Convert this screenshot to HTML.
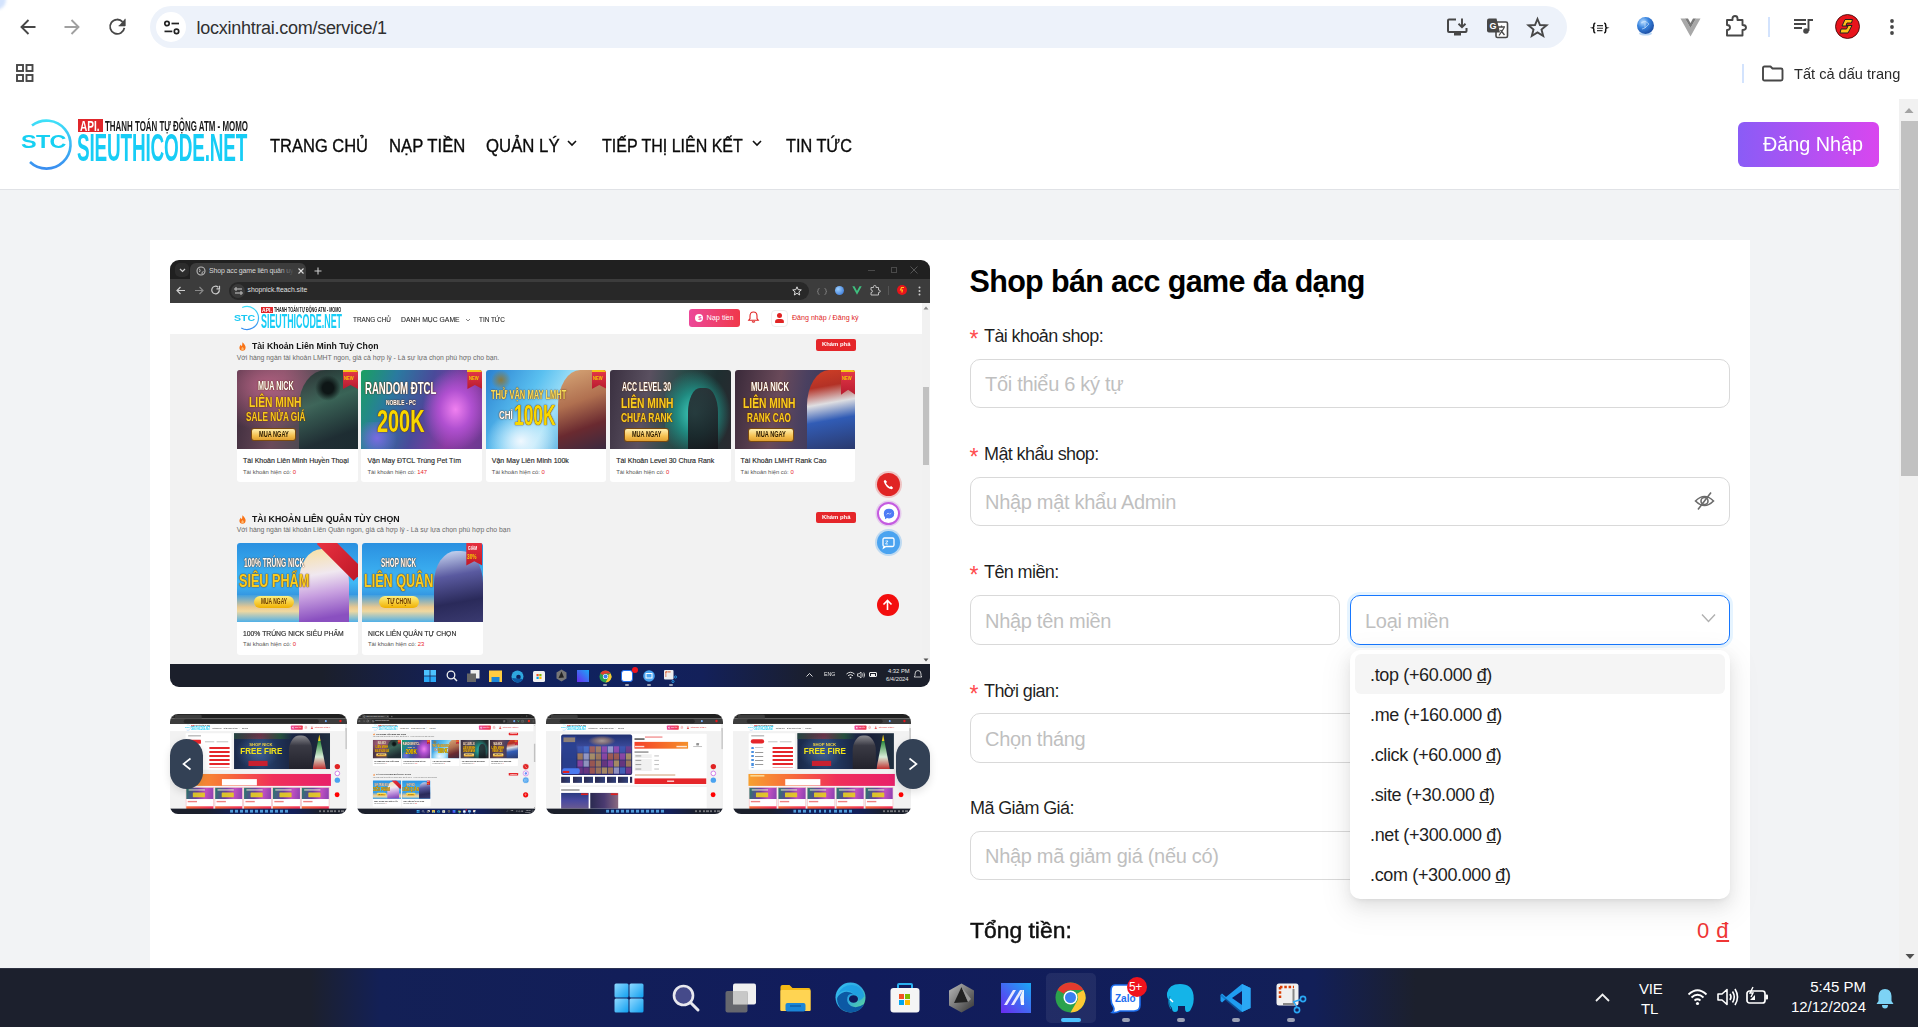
<!DOCTYPE html>
<html><head><meta charset="utf-8">
<style>
*{box-sizing:border-box;margin:0;padding:0}
html,body{width:1918px;height:1027px;overflow:hidden;background:#fff;font-family:"Liberation Sans",sans-serif;color:#000}
.a{position:absolute}
.t{position:absolute;white-space:nowrap;line-height:1}
svg{position:absolute;overflow:visible}
.nv{font-size:19px;color:#0a0a0a;-webkit-text-stroke:0.35px #0a0a0a;transform-origin:left top}
.inp{border:1px solid #d9d9d9;border-radius:10px;background:#fff}
.ph{font-size:20px;color:#bfbfbf;letter-spacing:-0.3px}
.dd{font-size:18px;color:#1f1f1f;letter-spacing:-0.35px}
</style></head><body>
<!-- ============ CHROME TOOLBAR ============ -->
<div class="a" style="left:0;top:0;width:1918px;height:96px;background:#fff"></div>
<div class="a" style="left:-6px;top:-6px;width:12px;height:16px;border-radius:0 0 10px 0;background:#d3e3fd;filter:blur(1.5px)"></div>
<div class="a" id="omni" style="left:150px;top:6px;width:1417px;height:42px;border-radius:21px;background:#edf2fa"></div>
<div class="a" style="left:156px;top:12px;width:30px;height:30px;border-radius:15px;background:#fff"></div>

<!-- toolbar icons -->
<svg style="left:19px;top:18px" width="18" height="18" viewBox="0 0 18 18"><path d="M16.5 9 H3 M9.5 2 L2.5 9 L9.5 16" fill="none" stroke="#474747" stroke-width="1.9"/></svg>
<svg style="left:63px;top:18px" width="18" height="18" viewBox="0 0 18 18"><path d="M1.5 9 H15 M8.5 2 L15.5 9 L8.5 16" fill="none" stroke="#a0a0a0" stroke-width="1.9"/></svg>
<svg style="left:108px;top:17px" width="20" height="20" viewBox="0 0 20 20"><path d="M16.35 10.78 A7.18 7.18 0 1 1 14.6 4.9" fill="none" stroke="#474747" stroke-width="1.8"/><path d="M17.2 1.8 V8.9 H10.6 Z" fill="#474747"/><path d="M17.2 1.8 V8.9 H10.6" fill="none" stroke="#474747" stroke-width="0.8"/></svg>
<svg style="left:161.5px;top:17.6px" width="20" height="20" viewBox="0 0 20 20"><circle cx="5" cy="5.5" r="2.2" fill="none" stroke="#222" stroke-width="1.7"/><path d="M9.5 5.5 H17" stroke="#222" stroke-width="1.7"/><circle cx="14.5" cy="13.4" r="2.2" fill="none" stroke="#222" stroke-width="1.7"/><path d="M2.5 13.4 H10.3" stroke="#222" stroke-width="1.7"/></svg>
<svg style="left:1446px;top:17px" width="23" height="21" viewBox="0 0 23 21"><path d="M10 2.5 H3 Q2 2.5 2 3.5 V14 Q2 15 3 15 H19.5 Q20.5 15 20.5 14 V11" fill="none" stroke="#474747" stroke-width="2"/><path d="M8 15 V18.5 H15 V15" fill="#474747"/><path d="M16 1.5 V10 M12.5 6.8 L16 10.2 L19.5 6.8" fill="none" stroke="#474747" stroke-width="1.9"/></svg>
<svg style="left:1486px;top:17px" width="23" height="22" viewBox="0 0 23 22"><rect x="10" y="5" width="11.5" height="15.5" rx="1.5" fill="#fff" stroke="#474747" stroke-width="1.6"/><path d="M3 1.5 H10.5 L14 15.5 H3 Q1 15.5 1 13.5 V3.5 Q1 1.5 3 1.5Z" fill="#474747"/><text x="3.5" y="12" font-family="Liberation Sans" font-weight="700" font-size="9" fill="#fff">G</text><path d="M12 10 H19 M15.5 8.5 V10 M13 18.5 L18 11 M14.5 13 L18.5 18" fill="none" stroke="#474747" stroke-width="1.3"/></svg>
<svg style="left:1527px;top:17px" width="21" height="21" viewBox="0 0 21 21"><path d="M10.5 2 L13 8 L19.5 8.3 L14.5 12.5 L16.2 19 L10.5 15.4 L4.8 19 L6.5 12.5 L1.5 8.3 L8 8Z" fill="none" stroke="#474747" stroke-width="1.9" stroke-linejoin="miter"/></svg>
<svg style="left:1591px;top:22px" width="18" height="12" viewBox="0 0 18 12"><path d="M4.3 1 Q2.8 1.3 2.8 3 V4.6 Q2.8 5.6 1.6 5.9 Q2.8 6.3 2.8 7.3 V8.9 Q2.8 10.6 4.3 10.9 M13.2 1 Q14.7 1.3 14.7 3 V4.6 Q14.7 5.6 15.9 5.9 Q14.7 6.3 14.7 7.3 V8.9 Q14.7 10.6 13.2 10.9" fill="none" stroke="#111" stroke-width="1.5"/><path d="M6 3.6 H12 M6 6.2 H12 M6 8.6 H11.5" stroke="#333" stroke-width="1.1"/></svg>
<svg style="left:1636px;top:16px" width="19" height="20" viewBox="0 0 19 20"><defs><radialGradient id="gb" cx="35%" cy="30%" r="75%"><stop offset="0" stop-color="#b8dcff"/><stop offset=".45" stop-color="#3a86e0"/><stop offset="1" stop-color="#1a4aa0"/></radialGradient></defs><ellipse cx="9.5" cy="17.5" rx="6.5" ry="2" fill="#9cc4f0" opacity=".7"/><circle cx="9.5" cy="9.5" r="8.5" fill="url(#gb)"/><path d="M5 7 L9 5 L13 8 L9 12 L6 13 M9 5 L9 12" stroke="#e0f0ff" stroke-width=".7" fill="none" opacity=".8"/></svg>
<svg style="left:1680px;top:18px" width="21" height="19" viewBox="0 0 21 19"><path d="M0.5 0.5 H5 L10.5 10 L16 0.5 H20.5 L10.5 18.5Z" fill="#a8a8a8"/><path d="M5 0.5 H8 L10.5 5 L13 0.5 H16 L10.5 10Z" fill="#7a7a7a"/></svg>
<svg style="left:1725px;top:15px" width="23" height="22" viewBox="0 0 23 22"><path d="M2 5 H7.5 V3.5 Q7.5 1 10 1 Q12.5 1 12.5 3.5 V5 H17.5 V10 Q21 10 21 12.5 Q21 15 17.5 15 V20.5 H2 V15 Q5 15 5 12.5 Q5 10 2 10Z" fill="none" stroke="#474747" stroke-width="1.9" stroke-linejoin="round"/></svg>
<div class="a" style="left:1768px;top:17px;width:2px;height:20px;background:#d3e3fd"></div>
<svg style="left:1793px;top:18px" width="21" height="16" viewBox="0 0 21 16"><path d="M1 2 H13 M1 6 H13 M1 10 H9" stroke="#474747" stroke-width="1.9"/><path d="M15.5 13 V2 H20" fill="none" stroke="#474747" stroke-width="1.9"/><circle cx="13" cy="13" r="2.8" fill="#474747"/></svg>
<svg style="left:1835px;top:14px" width="25" height="25" viewBox="0 0 25 25"><circle cx="12.5" cy="12.5" r="12" fill="#e8141b" stroke="#300" stroke-width=".8"/><path d="M17.5 5.5 H10 L7 12 H13 L11.5 15 H6 L5 19 H13 L17 11.5 H11 L12 9 H16.5Z" fill="#ffc21a" stroke="#222" stroke-width="1"/></svg>
<svg style="left:1889px;top:18px" width="6" height="18" viewBox="0 0 6 18"><circle cx="3" cy="3" r="1.9" fill="#474747"/><circle cx="3" cy="9" r="1.9" fill="#474747"/><circle cx="3" cy="15" r="1.9" fill="#474747"/></svg>
<svg style="left:16px;top:64px" width="18" height="19" viewBox="0 0 18 19"><rect x="1" y="1" width="6" height="6" fill="none" stroke="#474747" stroke-width="1.9"/><rect x="10.5" y="1" width="6" height="6" fill="none" stroke="#474747" stroke-width="1.9"/><rect x="1" y="11" width="6" height="6" fill="none" stroke="#474747" stroke-width="1.9"/><rect x="10.5" y="11" width="6" height="6" fill="none" stroke="#474747" stroke-width="1.9"/></svg>
<svg style="left:1762px;top:65px" width="22" height="17" viewBox="0 0 22 17"><path d="M2.5 1.5 H8.5 L10.5 3.5 H19 Q20.5 3.5 20.5 5 V14 Q20.5 15.5 19 15.5 H2.5 Q1 15.5 1 14 V3 Q1 1.5 2.5 1.5Z" fill="none" stroke="#474747" stroke-width="1.9" stroke-linejoin="round"/></svg>
<div class="t" style="left:196.6px;top:18.6px;font-size:18px;color:#303030;letter-spacing:-0.28px">locxinhtrai.com/service/1</div>
<div class="t" style="left:1794.3px;top:66px;font-size:15px;color:#2a2a2a;transform:scaleX(0.973);transform-origin:left">Tất cả dấu trang</div>
<div class="a" style="left:1742px;top:64px;width:2px;height:19px;background:#d3e3fd"></div>

<!-- ============ PAGE HEADER ============ -->
<div class="a" style="left:0;top:190px;width:1899px;height:778px;background:#f2f3f5"></div>
<div class="a" style="left:0;top:189px;width:1899px;height:1.3px;background:#e0e2e6"></div>

<!-- logo -->
<svg style="left:20px;top:116px" width="56" height="56" viewBox="0 0 56 56"><defs><linearGradient id="lg1" x1="0" y1="0" x2="0" y2="1"><stop offset="0" stop-color="#3ee0f8"/><stop offset="1" stop-color="#3a8ef0"/></linearGradient></defs><path d="M12 9.5 A24 24 0 1 1 10 46" fill="none" stroke="url(#lg1)" stroke-width="2.6"/></svg>
<div class="t" style="left:21px;top:133px;font-size:18px;font-weight:700;color:#17d0f2;transform:scaleX(1.3);transform-origin:left;letter-spacing:-0.5px">STC</div>
<div class="a" style="left:78px;top:119px;width:25px;height:13px;background:#e0262b"></div>
<div class="t" style="left:80px;top:119px;font-size:14px;font-weight:700;color:#fff;transform:scaleX(0.72);transform-origin:left">API.</div>
<div class="t" style="left:105px;top:118.5px;font-size:14.5px;font-weight:700;color:#1a1a1a;transform:scaleX(0.547);transform-origin:left">THANH TOÁN TỰ ĐỘNG ATM - MOMO</div>
<div class="t" style="left:77px;top:128px;font-size:39px;font-weight:700;color:#17cdf6;transform:scaleX(0.485);transform-origin:left;letter-spacing:-0.3px">SIEUTHICODE.NET</div>
<svg style="left:566px;top:139px" width="12" height="8" viewBox="0 0 12 8"><path d="M2 2 L6 6 L10 2" fill="none" stroke="#111" stroke-width="1.6"/></svg>
<svg style="left:751px;top:139px" width="12" height="8" viewBox="0 0 12 8"><path d="M2 2 L6 6 L10 2" fill="none" stroke="#111" stroke-width="1.6"/></svg>
<div class="t nv" style="left:269.5px;top:135.7px;transform:scaleX(0.868)">TRANG CHỦ</div>
<div class="t nv" style="left:389px;top:135.7px;transform:scaleX(0.878)">NẠP TIỀN</div>
<div class="t nv" style="left:486px;top:135.7px;transform:scaleX(0.882)">QUẢN LÝ</div>
<div class="t nv" style="left:602px;top:135.7px;transform:scaleX(0.842)">TIẾP THỊ LIÊN KẾT</div>
<div class="t nv" style="left:786px;top:135.7px;transform:scaleX(0.856)">TIN TỨC</div>
<div class="a" style="left:1738px;top:122px;width:141px;height:45px;border-radius:6px;background:linear-gradient(90deg,#8a5cf6,#d946ef)"></div>
<div class="t" style="left:1763px;top:134.4px;font-size:20.5px;color:#fff;transform:scaleX(0.965);transform-origin:left">Đăng Nhập</div>

<!-- ============ CARD ============ -->
<div class="a" style="left:150px;top:240px;width:1600px;height:728px;background:#fff"></div>




<!-- ============ MINI SCREENSHOT ============ -->
<div class="a" id="mini" style="left:170px;top:260px;width:760px;height:427px;border-radius:9px;overflow:hidden;background:#f2f2f2">
<div class="a" style="left:0px;top:0px;width:760px;height:19px;background:#202020"></div>
<div class="a" style="left:5px;top:3px;width:14px;height:14px;background:#2c2c2c;border-radius:5px"></div>
<svg style="left:9px;top:8px" width="7" height="5" viewBox="0 0 7 5"><path d="M1 1 L3.5 3.5 L6 1" fill="none" stroke="#ccc" stroke-width="1.2"/></svg>
<div class="a" style="left:20px;top:3px;width:116px;height:16px;background:#3c3c3c;border-radius:6px 6px 0 0"></div>
<svg style="left:26px;top:6px" width="10" height="10" viewBox="0 0 10 10"><circle cx="5" cy="5" r="4" fill="none" stroke="#bbb" stroke-width="1.1"/><path d="M3 2.5 Q5 4 3.5 6 M6 8 Q5.5 6 7.5 5.5" fill="none" stroke="#bbb" stroke-width="1"/></svg>
<div class="a" style="left:39px;top:5px;width:84px;height:12px;overflow:hidden"><div class="t" style="left:0px;top:2px;font-size:7px;color:#d8d8d8;letter-spacing:-0.15px">Shop acc game liên quân uy tín</div></div>
<div class="a" style="left:108px;top:5px;width:16px;height:12px;background:linear-gradient(90deg,rgba(60,60,60,0),#3c3c3c)"></div>
<svg style="left:128px;top:8px" width="6" height="6" viewBox="0 0 6 6"><path d="M0.5 0.5 L5.5 5.5 M5.5 0.5 L0.5 5.5" stroke="#ddd" stroke-width="1.1"/></svg>
<svg style="left:144px;top:7px" width="8" height="8" viewBox="0 0 8 8"><path d="M4 0.5 V7.5 M0.5 4 H7.5" stroke="#ccc" stroke-width="1.1"/></svg>
<div class="a" style="left:698px;top:10px;width:7px;height:1px;background:#4a4a4a"></div>
<div class="a" style="left:721px;top:7px;width:6px;height:6px;background:transparent;border:1px solid #4a4a4a"></div>
<svg style="left:740px;top:6px" width="8" height="8" viewBox="0 0 8 8"><path d="M0.5 0.5 L7.5 7.5 M7.5 0.5 L0.5 7.5" stroke="#555" stroke-width="1"/></svg>
<div class="a" style="left:0px;top:19px;width:760px;height:24px;background:#3c3c3c"></div>
<svg style="left:6px;top:26px" width="10" height="9" viewBox="0 0 10 9"><path d="M9 4.5 H1.5 M4.5 1 L1 4.5 L4.5 8" fill="none" stroke="#ccc" stroke-width="1.2"/></svg>
<svg style="left:24px;top:26px" width="10" height="9" viewBox="0 0 10 9"><path d="M1 4.5 H8.5 M5.5 1 L9 4.5 L5.5 8" fill="none" stroke="#888" stroke-width="1.2"/></svg>
<svg style="left:41px;top:25px" width="10" height="10" viewBox="0 0 10 10"><path d="M8.3 4.5 A3.8 3.8 0 1 1 7.2 2.3" fill="none" stroke="#ccc" stroke-width="1.2"/><path d="M8.5 0.8 V3.8 H5.5" fill="none" stroke="#ccc" stroke-width="1.2"/></svg>
<div class="a" style="left:59px;top:22px;width:580px;height:18px;background:#282828;border-radius:9px"></div>
<div class="a" style="left:61px;top:24px;width:14px;height:14px;background:#3a3a3a;border-radius:7px"></div>
<svg style="left:64px;top:27px" width="9" height="8" viewBox="0 0 9 8"><circle cx="2" cy="2" r="1.2" fill="none" stroke="#ddd" stroke-width=".9"/><path d="M4 2 H8 M1 6 H5" stroke="#ddd" stroke-width=".9"/><circle cx="7" cy="6" r="1.2" fill="none" stroke="#ddd" stroke-width=".9"/></svg>
<div class="t" style="left:77.5px;top:27px;font-size:6.8px;color:#e0e0e0">shopnick.fteach.site</div>
<svg style="left:622px;top:26px" width="10" height="10" viewBox="0 0 10 10"><path d="M5 0.8 L6.2 3.7 L9.3 3.9 L6.9 5.9 L7.7 9 L5 7.3 L2.3 9 L3.1 5.9 L0.7 3.9 L3.8 3.7Z" fill="none" stroke="#ddd" stroke-width="1"/></svg>
<svg style="left:647px;top:28px" width="10" height="7" viewBox="0 0 10 7"><path d="M2.5 0.5 Q1 0.5 1 2 V3 Q1 3.5 0.3 3.5 Q1 3.5 1 4 V5 Q1 6.5 2.5 6.5 M7.5 0.5 Q9 0.5 9 2 V3 Q9 3.5 9.7 3.5 Q9 3.5 9 4 V5 Q9 6.5 7.5 6.5" fill="none" stroke="#888" stroke-width=".8"/></svg>
<div class="a" style="left:665px;top:26px;width:9px;height:9px;background:radial-gradient(circle at 35% 35%,#9cd0ff,#2a6ad0);border-radius:5px"></div>
<svg style="left:682px;top:26px" width="10" height="9" viewBox="0 0 10 9"><path d="M0.3 0.3 H2.5 L5 5 L7.5 0.3 H9.7 L5 8.7Z" fill="#3fbf7f"/></svg>
<svg style="left:700px;top:25px" width="11" height="11" viewBox="0 0 11 11"><path d="M1 2.5 H3.5 V1.5 Q3.5 0.5 4.8 0.5 Q6 0.5 6 1.5 V2.5 H8.5 V5 Q10.3 5 10.3 6.2 Q10.3 7.5 8.5 7.5 V10 H1 V7.5 Q2.5 7.5 2.5 6.2 Q2.5 5 1 5Z" fill="none" stroke="#ccc" stroke-width=".9"/></svg>
<div class="a" style="left:718px;top:26px;width:1px;height:9px;background:#555"></div>
<div class="a" style="left:727px;top:25px;width:10px;height:10px;background:#e8141b;border-radius:5px"></div>
<svg style="left:729px;top:27px" width="6" height="6" viewBox="0 0 6 6"><path d="M5 0.5 H2.5 L1.5 3 H3.5 L2.8 5.5" fill="none" stroke="#ffc21a" stroke-width="1.1"/></svg>
<svg style="left:748px;top:26px" width="3" height="10" viewBox="0 0 3 10"><circle cx="1.5" cy="1.5" r="1" fill="#ccc"/><circle cx="1.5" cy="5" r="1" fill="#ccc"/><circle cx="1.5" cy="8.5" r="1" fill="#ccc"/></svg>
<div class="a" style="left:0px;top:43px;width:752px;height:31px;background:#fff"></div>
<div class="a" style="left:752px;top:43px;width:8px;height:361px;background:#f1f1f1"></div>
<svg style="left:62.8px;top:44.1px" width="28" height="28" viewBox="0 0 28 28"><defs><linearGradient id="mlg" x1="0" y1="0" x2="0" y2="1"><stop offset="0" stop-color="#40e0f8"/><stop offset="1" stop-color="#3a8ef0"/></linearGradient></defs><path d="M9.14 3.58 A11.5 11.5 0 1 1 8.25 23.96" fill="none" stroke="url(#mlg)" stroke-width="1.2"/></svg>
<div class="t" style="left:63.8px;top:54.46px;font-size:8.8px;color:#19c8f2;font-weight:700;transform:scaleX(1.205);transform-origin:left">STC</div>
<div class="a" style="left:91px;top:46.9px;width:11.6px;height:5.9px;background:#e0262b"></div>
<div class="t" style="left:92px;top:46.92px;font-size:6px;color:#fff;font-weight:700;transform:scaleX(0.84);transform-origin:left">API.</div>
<div class="t" style="left:103.8px;top:46.19px;font-size:7.8px;color:#1a1a1a;font-weight:700;transform:scaleX(0.478);transform-origin:left">THANH TOÁN TỰ ĐỘNG ATM - MOMO</div>
<div class="t" style="left:90.7px;top:51.56px;font-size:19.5px;color:#17cdf6;font-weight:700;transform:scaleX(0.456);transform-origin:left">SIEUTHICODE.NET</div>
<div class="t" style="left:182.8px;top:55.7px;font-size:7.7px;color:#262626;transform:scaleX(0.83);transform-origin:left;-webkit-text-stroke:0.1px #262626">TRANG CHỦ</div>
<div class="t" style="left:231.4px;top:55.7px;font-size:7.7px;color:#262626;transform:scaleX(0.885);transform-origin:left;-webkit-text-stroke:0.1px #262626">DANH MỤC GAME</div>
<svg style="left:295px;top:58px" width="6" height="4" viewBox="0 0 6 4"><path d="M1 1 L3 3 L5 1" fill="none" stroke="#777" stroke-width=".9"/></svg>
<div class="t" style="left:309px;top:55.7px;font-size:7.7px;color:#262626;transform:scaleX(0.83);transform-origin:left;-webkit-text-stroke:0.1px #262626">TIN TỨC</div>
<div class="a" style="left:519px;top:49px;width:51px;height:17.5px;background:linear-gradient(90deg,#ec4899,#f0384a);border-radius:3px"></div>
<div class="a" style="left:524.5px;top:53.5px;width:8.5px;height:8.5px;background:#fff;border-radius:5px"></div>
<div class="t" style="left:528.2px;top:54.5px;font-size:6px;color:#ec4899;font-weight:700">$</div>
<div class="t" style="left:536.5px;top:54px;font-size:7.3px;color:#fff">Nạp tiền</div>
<svg style="left:578px;top:51px" width="11" height="12" viewBox="0 0 11 12"><path d="M5.5 1 Q9 1 9 5 V7.5 L10.3 9.3 H0.7 L2 7.5 V5 Q2 1 5.5 1Z M4 10.5 Q5.5 11.8 7 10.5" fill="none" stroke="#e02424" stroke-width="1.1"/></svg>
<div class="a" style="left:601px;top:50px;width:16.5px;height:17px;background:#fff;border-radius:4px;border:1px solid #eee"></div>
<div class="a" style="left:606.8px;top:53px;width:5px;height:5px;background:#e02424;border-radius:3px"></div>
<div class="a" style="left:605px;top:58.5px;width:8.6px;height:4px;background:#e02424;border-radius:4px 4px 1px 1px"></div>
<div class="t" style="left:622px;top:55px;font-size:7.1px;color:#e02424">Đăng nhập / Đăng ký</div>
<div class="a" style="left:753px;top:127px;width:6px;height:78px;background:#c1c1c1"></div>
<svg style="left:753px;top:46px" width="6" height="4" viewBox="0 0 6 4"><path d="M0.5 3.5 L3 0.5 L5.5 3.5Z" fill="#888"/></svg>
<svg style="left:753px;top:398px" width="6" height="4" viewBox="0 0 6 4"><path d="M0.5 0.5 L3 3.5 L5.5 0.5Z" fill="#555"/></svg>
<svg style="left:69px;top:82px" width="7" height="9" viewBox="0 0 7 9"><path d="M3.5 0.3 Q6.8 3.5 6.6 5.8 Q6.4 8.8 3.5 8.8 Q0.5 8.8 0.4 5.8 Q0.4 4 2 2.5 Q2 4 3 4.2 Q3.3 2 3.5 0.3Z" fill="#f97316"/><path d="M3.5 5 Q5 6.2 4.8 7.3 Q4.5 8.3 3.5 8.3 Q2.3 8.3 2.3 7.2 Q2.4 6 3.5 5Z" fill="#fdba74"/></svg>
<div class="t" style="left:82px;top:81px;font-size:9.8px;color:#151515;font-weight:700;transform:scaleX(0.885);transform-origin:left">Tài Khoản Liên Minh Tuỳ Chọn</div>
<div class="t" style="left:66.7px;top:94.5px;font-size:6.85px;color:#6a6a6a">Với hàng ngàn tài khoản LMHT ngon, giá cả hợp lý - Là sự lựa chọn phù hợp cho bạn.</div>
<div class="a" style="left:646px;top:78.5px;width:39.5px;height:12px;background:#e5262a;border-radius:2px"></div>
<div class="t" style="left:651.5px;top:81.3px;font-size:6.2px;color:#fff;font-weight:700;transform:scaleX(0.95);transform-origin:left">Khám phá</div>
<div class="a" style="left:67.0px;top:110px;width:120.5px;height:112px;background:#fff;border-radius:3px;overflow:hidden"><div class="a" style="left:0;top:0;width:120.5px;height:79px;background:linear-gradient(100deg,#3a2a3a 0%,#6a4a5a 35%,#4a4a50 60%,#2a3a3a 100%);overflow:hidden"><div class="a" style="left:0px;top:0px;width:121px;height:79px;background:radial-gradient(ellipse at 25% 20%,#b06080 0%,transparent 50%)"></div><div class="a" style="left:62px;top:0px;width:59px;height:79px;background:linear-gradient(160deg,#1e2a2a,#3a6a5a 40%,#1a2a30 80%);border-radius:45% 0 0 0;opacity:.85"></div><div class="a" style="left:78px;top:5px;width:26px;height:26px;background:radial-gradient(circle,#0e1616 30%,transparent 70%)"></div><div class="t" style="left:20.8px;top:10.38px;font-size:12.5px;color:#fff;font-weight:700;transform:scaleX(0.576);transform-origin:left;text-shadow:0 0 1px #7a3a00,0 0 2px #5a2a00">MUA NICK</div><div class="t" style="left:11.9px;top:24.05px;font-size:15px;color:#f8cc20;font-weight:700;transform:scaleX(0.685);transform-origin:left;text-shadow:0 0 1px #7a3a00,0 0 2px #5a2a00">LIÊN MINH</div><div class="t" style="left:8.9px;top:40.31px;font-size:13px;color:#f8cc20;font-weight:700;transform:scaleX(0.632);transform-origin:left;text-shadow:0 0 1px #7a3a00,0 0 2px #5a2a00">SALE NỬA GIÁ</div><div class="a" style="left:14.9px;top:58.5px;width:43.6px;height:11.799999999999997px;background:linear-gradient(#fff0b0,#f5c050 60%,#e0a030);border-radius:2px;box-shadow:0 0 0 1px #7a4a10"></div><div class="t" style="left:21.88px;top:59.93px;font-size:9px;color:#2a1a00;font-weight:700;transform:scaleX(0.62);transform-origin:left">MUA NGAY</div><div class="a" style="left:106px;top:-1px;width:15px;height:20px;background:linear-gradient(#e83a4a,#b81c30);clip-path:polygon(0 0,100% 0,100% 100%,50% 80%,0 100%)"></div><div class="a" style="left:106px;top:-1px;width:15px;height:2.5px;background:#f5c518"></div><div class="t" style="left:107.2px;top:5.5px;font-size:5.5px;color:#f5d000;font-weight:700;transform:scaleX(0.75);transform-origin:left">NEW</div></div><div class="t" style="left:6px;top:87px;font-size:7px;color:#2a2a2a;-webkit-text-stroke:0.15px #2a2a2a">Tài Khoản Liên Minh Huyền Thoại</div><div class="t" style="left:6px;top:99.5px;font-size:5.9px;color:#555">Tài khoản hiện có: <span style="color:#e8242a">0</span></div></div>
<div class="a" style="left:191.4px;top:110px;width:120.5px;height:112px;background:#fff;border-radius:3px;overflow:hidden"><div class="a" style="left:0;top:0;width:120.5px;height:79px;background:linear-gradient(110deg,#1aa060 0%,#2a7aa0 25%,#4a4a9a 50%,#8a3aa0 75%,#6a3a90 100%);overflow:hidden"><div class="a" style="left:62px;top:0px;width:59px;height:79px;background:radial-gradient(ellipse at 55% 50%,#f080f0 0%,#b050d0 35%,transparent 72%)"></div><div class="a" style="left:0px;top:52px;width:40px;height:27px;background:radial-gradient(circle at 40% 60%,#7a6ae0,transparent 70%)"></div><div class="t" style="left:4px;top:10.29px;font-size:17px;color:#fff;font-weight:700;transform:scaleX(0.563);transform-origin:left;text-shadow:0 0 1px #7a3a00,0 0 2px #5a2a00">RANDOM ĐTCL</div><div class="t" style="left:24.8px;top:28.96px;font-size:8px;color:#fff;font-weight:700;transform:scaleX(0.613);transform-origin:left;text-shadow:0 0 1px #7a3a00,0 0 2px #5a2a00">NOBILE - PC</div><div class="t" style="left:15.9px;top:36.47px;font-size:31px;color:#f8d800;font-weight:700;transform:scaleX(0.641);transform-origin:left;text-shadow:0 0 1px #7a3a00,0 0 2px #5a2a00">200K</div><div class="a" style="left:106px;top:-1px;width:15px;height:20px;background:linear-gradient(#e83a4a,#b81c30);clip-path:polygon(0 0,100% 0,100% 100%,50% 80%,0 100%)"></div><div class="a" style="left:106px;top:-1px;width:15px;height:2.5px;background:#f5c518"></div><div class="t" style="left:107.2px;top:5.5px;font-size:5.5px;color:#f5d000;font-weight:700;transform:scaleX(0.75);transform-origin:left">NEW</div></div><div class="t" style="left:6px;top:87px;font-size:7px;color:#2a2a2a;-webkit-text-stroke:0.15px #2a2a2a">Vận May ĐTCL Trúng Pet Tím</div><div class="t" style="left:6px;top:99.5px;font-size:5.9px;color:#555">Tài khoản hiện có: <span style="color:#e8242a">147</span></div></div>
<div class="a" style="left:315.8px;top:110px;width:120.5px;height:112px;background:#fff;border-radius:3px;overflow:hidden"><div class="a" style="left:0;top:0;width:120.5px;height:79px;background:linear-gradient(120deg,#2a80d0 0%,#5ac0f0 35%,#a0e0f8 55%,#60b0e0 75%,#3a5a9a 100%);overflow:hidden"><div class="a" style="left:72px;top:0px;width:49px;height:79px;background:linear-gradient(160deg,#d8a878 0%,#b07050 40%,#6a2a30 70%,#3a2a40 100%);border-radius:45% 0 0 0"></div><div class="a" style="left:0px;top:40px;width:70px;height:39px;background:radial-gradient(ellipse at 50% 80%,#f0f8ff,transparent 70%)"></div><div class="a" style="left:5px;top:0px;width:20px;height:20px;background:radial-gradient(circle,#8a7a40,transparent 70%)"></div><div class="t" style="left:5.3px;top:19.38px;font-size:12.5px;color:#f8e060;font-weight:700;transform:scaleX(0.603);transform-origin:left;text-shadow:0 0 1px #7a3a00,0 0 2px #5a2a00">THỬ VẬN MAY LMHT</div><div class="t" style="left:13.3px;top:39.57px;font-size:11px;color:#fff;font-weight:700;transform:scaleX(0.728);transform-origin:left;text-shadow:0 0 1px #7a3a00,0 0 2px #5a2a00">CHỈ</div><div class="t" style="left:28.1px;top:30.73px;font-size:29px;color:#f8d800;font-weight:700;transform:scaleX(0.6);transform-origin:left;text-shadow:0 0 1px #7a3a00,0 0 2px #5a2a00">100K</div><div class="a" style="left:106px;top:-1px;width:15px;height:20px;background:linear-gradient(#e83a4a,#b81c30);clip-path:polygon(0 0,100% 0,100% 100%,50% 80%,0 100%)"></div><div class="a" style="left:106px;top:-1px;width:15px;height:2.5px;background:#f5c518"></div><div class="t" style="left:107.2px;top:5.5px;font-size:5.5px;color:#f5d000;font-weight:700;transform:scaleX(0.75);transform-origin:left">NEW</div></div><div class="t" style="left:6px;top:87px;font-size:7px;color:#2a2a2a;-webkit-text-stroke:0.15px #2a2a2a">Vận May Liên Minh 100k</div><div class="t" style="left:6px;top:99.5px;font-size:5.9px;color:#555">Tài khoản hiện có: <span style="color:#e8242a">0</span></div></div>
<div class="a" style="left:440.20000000000005px;top:110px;width:120.5px;height:112px;background:#fff;border-radius:3px;overflow:hidden"><div class="a" style="left:0;top:0;width:120.5px;height:79px;background:linear-gradient(100deg,#3a3040 0%,#5a5060 30%,#2a4a48 55%,#1e2e30 80%,#2a2a30 100%);overflow:hidden"><div class="a" style="left:55px;top:0px;width:66px;height:79px;background:radial-gradient(ellipse at 45% 55%,#40d0c0 0%,#208a80 35%,transparent 70%)"></div><div class="a" style="left:78px;top:18px;width:30px;height:61px;background:linear-gradient(#2a2a30,#15151a);border-radius:40% 40% 0 0;opacity:.85"></div><div class="t" style="left:11.7px;top:11.38px;font-size:12.5px;color:#fff;font-weight:700;transform:scaleX(0.557);transform-origin:left;text-shadow:0 0 1px #7a3a00,0 0 2px #5a2a00">ACC LEVEL 30</div><div class="t" style="left:10.8px;top:24.55px;font-size:15px;color:#f8cc20;font-weight:700;transform:scaleX(0.685);transform-origin:left;text-shadow:0 0 1px #7a3a00,0 0 2px #5a2a00">LIÊN MINH</div><div class="t" style="left:10.8px;top:41.31px;font-size:13px;color:#f8cc20;font-weight:700;transform:scaleX(0.649);transform-origin:left;text-shadow:0 0 1px #7a3a00,0 0 2px #5a2a00">CHƯA RANK</div><div class="a" style="left:15.1px;top:58.8px;width:43.1px;height:12.100000000000009px;background:linear-gradient(#fff0b0,#f5c050 60%,#e0a030);border-radius:2px;box-shadow:0 0 0 1px #7a4a10"></div><div class="t" style="left:22.0px;top:60.29px;font-size:9px;color:#2a1a00;font-weight:700;transform:scaleX(0.613);transform-origin:left">MUA NGAY</div></div><div class="t" style="left:6px;top:87px;font-size:7px;color:#2a2a2a;-webkit-text-stroke:0.15px #2a2a2a">Tài Khoản Level 30 Chưa Rank</div><div class="t" style="left:6px;top:99.5px;font-size:5.9px;color:#555">Tài khoản hiện có: <span style="color:#e8242a">0</span></div></div>
<div class="a" style="left:564.6px;top:110px;width:120.5px;height:112px;background:#fff;border-radius:3px;overflow:hidden"><div class="a" style="left:0;top:0;width:120.5px;height:79px;background:linear-gradient(100deg,#3a2a3a 0%,#6a4a5a 35%,#4a4060 55%,#2a3050 100%);overflow:hidden"><div class="a" style="left:72px;top:0px;width:49px;height:79px;background:linear-gradient(170deg,#e04020 0%,#c03020 22%,#f0f0f0 42%,#3060c0 62%,#2a3a70 100%);border-radius:45% 0 0 0;opacity:.9"></div><div class="t" style="left:16.3px;top:11.38px;font-size:12.5px;color:#fff;font-weight:700;transform:scaleX(0.611);transform-origin:left;text-shadow:0 0 1px #7a3a00,0 0 2px #5a2a00">MUA NICK</div><div class="t" style="left:8.6px;top:24.55px;font-size:15px;color:#f8cc20;font-weight:700;transform:scaleX(0.685);transform-origin:left;text-shadow:0 0 1px #7a3a00,0 0 2px #5a2a00">LIÊN MINH</div><div class="t" style="left:12.9px;top:41.31px;font-size:13px;color:#f8cc20;font-weight:700;transform:scaleX(0.627);transform-origin:left;text-shadow:0 0 1px #7a3a00,0 0 2px #5a2a00">RANK CAO</div><div class="a" style="left:14.6px;top:58.8px;width:43.9px;height:12.100000000000009px;background:linear-gradient(#fff0b0,#f5c050 60%,#e0a030);border-radius:2px;box-shadow:0 0 0 1px #7a4a10"></div><div class="t" style="left:21.62px;top:60.29px;font-size:9px;color:#2a1a00;font-weight:700;transform:scaleX(0.624);transform-origin:left">MUA NGAY</div><div class="a" style="left:106px;top:-1px;width:15px;height:26px;background:linear-gradient(#e83a4a,#b81c30);clip-path:polygon(0 0,100% 0,100% 100%,50% 80%,0 100%)"></div><div class="a" style="left:106px;top:-1px;width:15px;height:2.5px;background:#f5c518"></div><div class="t" style="left:107.2px;top:5.5px;font-size:5.5px;color:#f5d000;font-weight:700;transform:scaleX(0.75);transform-origin:left">NEW</div></div><div class="t" style="left:6px;top:87px;font-size:7px;color:#2a2a2a;-webkit-text-stroke:0.15px #2a2a2a">Tài Khoản LMHT Rank Cao</div><div class="t" style="left:6px;top:99.5px;font-size:5.9px;color:#555">Tài khoản hiện có: <span style="color:#e8242a">0</span></div></div>
<svg style="left:69px;top:254.5px" width="7" height="9" viewBox="0 0 7 9"><path d="M3.5 0.3 Q6.8 3.5 6.6 5.8 Q6.4 8.8 3.5 8.8 Q0.5 8.8 0.4 5.8 Q0.4 4 2 2.5 Q2 4 3 4.2 Q3.3 2 3.5 0.3Z" fill="#f97316"/><path d="M3.5 5 Q5 6.2 4.8 7.3 Q4.5 8.3 3.5 8.3 Q2.3 8.3 2.3 7.2 Q2.4 6 3.5 5Z" fill="#fdba74"/></svg>
<div class="t" style="left:82px;top:253.5px;font-size:9.8px;color:#151515;font-weight:700;transform:scaleX(0.896);transform-origin:left">TÀI KHOẢN LIÊN QUÂN TÙY CHỌN</div>
<div class="t" style="left:66.7px;top:267px;font-size:6.85px;color:#6a6a6a">Với hàng ngàn tài khoản Liên Quân ngon, giá cả hợp lý - Là sự lựa chọn phù hợp cho bạn</div>
<div class="a" style="left:646px;top:251.5px;width:39.5px;height:11.5px;background:#e5262a;border-radius:2px"></div>
<div class="t" style="left:651.5px;top:254px;font-size:6.2px;color:#fff;font-weight:700;transform:scaleX(0.95);transform-origin:left">Khám phá</div>
<div class="a" style="left:67px;top:283px;width:120.5px;height:112px;background:#fff;border-radius:3px;overflow:hidden"><div class="a" style="left:0;top:0;width:120.5px;height:78.5px;background:linear-gradient(180deg,#2a90e0 0%,#40b8f5 50%,#2a7ad0 80%);overflow:hidden"><div class="a" style="left:0px;top:52px;width:121px;height:27px;background:linear-gradient(180deg,#40a0e0,#e8c890 45%,#f0d8a0 60%,#50b0e8)"></div><div class="a" style="left:62px;top:6px;width:50px;height:73px;background:linear-gradient(170deg,#f8e0a0 0%,#f0e8f0 35%,#c8a0e0 60%,#8a50c0 90%);border-radius:45% 45% 0 0"></div><div class="t" style="left:7.2px;top:14.44px;font-size:12px;color:#fff;font-weight:700;transform:scaleX(0.551);transform-origin:left;text-shadow:0 0 1px #7a3a00,0 0 2px #5a2a00">100% TRÚNG NICK</div><div class="t" style="left:1.8px;top:27.53px;font-size:19px;color:#f8cc20;font-weight:700;transform:scaleX(0.665);transform-origin:left;text-shadow:0 0 1px #7a3a00,0 0 2px #5a2a00">SIÊU PHẨM</div><div class="a" style="left:17.1px;top:53.1px;width:39.6px;height:11.7px;background:linear-gradient(#fff080,#f0b000);border-radius:6px"></div><div class="t" style="left:24px;top:54.33px;font-size:9px;color:#6a3a00;font-weight:700;transform:scaleX(0.543);transform-origin:left">MUA NGAY</div><div class="a" style="left:96px;top:-12px;width:15px;height:52px;background:linear-gradient(#e83040,#c01a28);transform:rotate(-45deg)"></div></div><div class="t" style="left:6px;top:86.5px;font-size:7px;color:#2a2a2a;transform:scaleX(0.97);transform-origin:left;-webkit-text-stroke:0.15px #2a2a2a">100% TRÚNG NICK SIÊU PHẨM</div><div class="t" style="left:6px;top:99.0px;font-size:5.9px;color:#555">Tài khoản hiện có: <span style="color:#e8242a">0</span></div></div>
<div class="a" style="left:192px;top:283px;width:120.5px;height:112px;background:#fff;border-radius:3px;overflow:hidden"><div class="a" style="left:0;top:0;width:120.5px;height:78.5px;background:linear-gradient(180deg,#2a90e0 0%,#40b8f5 50%,#2a7ad0 80%);overflow:hidden"><div class="a" style="left:0px;top:52px;width:121px;height:27px;background:linear-gradient(180deg,#40a0e0,#e8c890 45%,#f0d8a0 60%,#50b0e8)"></div><div class="a" style="left:72px;top:8px;width:49px;height:71px;background:linear-gradient(170deg,#d0e0f8 0%,#5a5aa0 35%,#2a2a5a 70%,#3a3a70 100%);border-radius:45% 45% 0 0"></div><div class="t" style="left:19.3px;top:14.44px;font-size:12px;color:#fff;font-weight:700;transform:scaleX(0.528);transform-origin:left;text-shadow:0 0 1px #7a3a00,0 0 2px #5a2a00">SHOP NICK</div><div class="t" style="left:2.2px;top:27.53px;font-size:19px;color:#f8cc20;font-weight:700;transform:scaleX(0.663);transform-origin:left;text-shadow:0 0 1px #7a3a00,0 0 2px #5a2a00">LIÊN QUÂN</div><div class="a" style="left:16.6px;top:53.1px;width:40.5px;height:11.7px;background:linear-gradient(#fff080,#f0b000);border-radius:6px"></div><div class="t" style="left:25px;top:54.33px;font-size:9px;color:#6a3a00;font-weight:700;transform:scaleX(0.572);transform-origin:left">TỰ CHỌN</div><div class="a" style="left:104.3px;top:-1px;width:16px;height:23.5px;background:linear-gradient(#e83040,#c01a28);clip-path:polygon(0 0,100% 0,100% 100%,50% 82%,0 100%)"></div><div class="t" style="left:106px;top:3px;font-size:5px;color:#fff;font-weight:700;transform:scaleX(0.7);transform-origin:left">GIẢM</div><div class="t" style="left:105px;top:9.5px;font-size:7px;color:#f5d000;font-weight:700;transform:scaleX(0.68);transform-origin:left">30%</div></div><div class="t" style="left:6px;top:86.5px;font-size:7px;color:#2a2a2a;transform:scaleX(0.97);transform-origin:left;-webkit-text-stroke:0.15px #2a2a2a">NICK LIÊN QUÂN TỰ CHỌN</div><div class="t" style="left:6px;top:99.0px;font-size:5.9px;color:#555">Tài khoản hiện có: <span style="color:#e8242a">23</span></div></div>
<div class="a" style="left:707px;top:213px;width:23px;height:23px;background:#e02424;border-radius:12px;box-shadow:0 0 0 2px rgba(224,36,36,0.22)"></div>
<svg style="left:713px;top:219px" width="11" height="11" viewBox="0 0 11 11"><path d="M2 0.8 L4 2.8 L3 4.3 Q4.5 6.8 6.7 8 L8.2 7 L10.2 9 L8.8 10.3 Q3 9.5 0.7 2.2Z" fill="#fff"/></svg>
<div class="a" style="left:707px;top:242px;width:23px;height:23px;background:#fff;border-radius:12px;border:2.5px solid #c45be0;box-shadow:0 0 0 1.5px rgba(196,91,224,0.25)"></div>
<svg style="left:712.5px;top:247.5px" width="12" height="12" viewBox="0 0 12 12"><path d="M6 0.8 Q11.2 0.8 11.2 5.6 Q11.2 10.4 6 10.4 Q5 10.4 4 10.1 L2 11.2 V9.2 Q0.8 7.9 0.8 5.6 Q0.8 0.8 6 0.8Z" fill="#4f7cf5"/><path d="M3 7 L5 4.8 L6.7 6 L9 4.3 L7 6.6 L5.3 5.4Z" fill="#fff"/></svg>
<div class="a" style="left:707px;top:271px;width:23px;height:23px;background:#4aa3f0;border-radius:12px;box-shadow:0 0 0 2px rgba(74,163,240,0.3)"></div>
<svg style="left:712px;top:276.5px" width="13" height="12" viewBox="0 0 13 12"><path d="M2.5 1 H10.5 Q12 1 12 2.5 V8 Q12 9.5 10.5 9.5 H4 L1.5 11 L2 9.3 Q1 9 1 8 V2.5 Q1 1 2.5 1Z" fill="none" stroke="#fff" stroke-width="1.3"/><path d="M3.5 4 H6 L3.5 7 H6" fill="none" stroke="#fff" stroke-width=".8"/></svg>
<div class="a" style="left:706.5px;top:334px;width:22px;height:22px;background:#f30e0e;border-radius:11px"></div>
<svg style="left:712px;top:339px" width="11" height="12" viewBox="0 0 11 12"><path d="M5.5 11 V1.5 M1.5 5.5 L5.5 1.5 L9.5 5.5" fill="none" stroke="#fff" stroke-width="1.6"/></svg>
<div class="a" style="left:0px;top:404px;width:760px;height:23px;background:linear-gradient(90deg,#1b1f2b 0%,#1b1f2b 20%,#13205a 38%,#10225e 55%,#13205a 70%,#1b1f2b 85%)"></div>
<svg style="left:254.1px;top:410px" width="12" height="12" viewBox="0 0 12 12"><rect x="0" y="0" width="5.6" height="5.6" fill="#4cc2ff"/><rect x="6.4" y="0" width="5.6" height="5.6" fill="#4cc2ff"/><rect x="0" y="6.4" width="5.6" height="5.6" fill="#2aa8f5"/><rect x="6.4" y="6.4" width="5.6" height="5.6" fill="#2aa8f5"/></svg>
<svg style="left:276.0px;top:410px" width="12" height="12" viewBox="0 0 12 12"><circle cx="5" cy="5" r="3.8" fill="none" stroke="#eee" stroke-width="1.3"/><path d="M7.8 7.8 L11 11" stroke="#eee" stroke-width="1.5"/></svg>
<svg style="left:297.3px;top:410px" width="13" height="12" viewBox="0 0 13 12"><rect x="3.5" y="0" width="9" height="8.5" fill="#eee"/><rect x="0" y="3.5" width="9" height="8.5" fill="#666"/></svg>
<svg style="left:319.2px;top:410px" width="13" height="12" viewBox="0 0 13 12"><rect x="0" y="0.5" width="13" height="11.5" fill="#ffcc40"/><rect x="2.5" y="7" width="8" height="5" fill="#1a86d8"/></svg>
<svg style="left:341.0px;top:410px" width="13" height="13" viewBox="0 0 13 13"><circle cx="6.5" cy="6.5" r="6" fill="#2fa8e0"/><circle cx="7.5" cy="7" r="2.3" fill="#10225e"/><path d="M1 8 Q3 13 8 12.5 Q11 12 12 9" fill="#0c59a4"/></svg>
<svg style="left:363.4px;top:409px" width="12" height="13" viewBox="0 0 12 13"><rect x="0" y="2" width="12" height="11" rx="1.5" fill="#f0f0f0"/><rect x="3.5" y="5" width="2.2" height="2.2" fill="#f25022"/><rect x="6.3" y="5" width="2.2" height="2.2" fill="#7fba00"/><rect x="3.5" y="7.8" width="2.2" height="2.2" fill="#00a4ef"/><rect x="6.3" y="7.8" width="2.2" height="2.2" fill="#ffb900"/></svg>
<svg style="left:385.8px;top:409px" width="11" height="13" viewBox="0 0 11 13"><path d="M5.5 0.5 L10.5 3.5 V9.5 L5.5 12.5 L0.5 9.5 V3.5Z" fill="#777"/><path d="M5.5 2.5 L2.5 9 L8 8.5Z" fill="#222"/></svg>
<div class="a" style="left:407.1px;top:410px;width:12px;height:12px;background:linear-gradient(45deg,#6a2af0,#1aa8f5)"></div>
<svg style="left:428.5px;top:409.5px" width="13" height="13" viewBox="0 0 13 13"><circle cx="6.5" cy="6.5" r="6" fill="#2ba24c"/><path d="M6.5 0.5 A6 6 0 0 1 11.7 3.5 H6.5 A3 3 0 0 0 3.9 5 L1.3 3.5 A6 6 0 0 1 6.5 0.5Z" fill="#e33b2e"/><path d="M11.7 3.5 A6 6 0 0 1 6.5 12.5 L9.1 8 A3 3 0 0 0 9.1 5Z" fill="#fcc934"/><circle cx="6.5" cy="6.5" r="2.6" fill="#fff"/><circle cx="6.5" cy="6.5" r="2" fill="#3a7ff0"/></svg>
<div class="a" style="left:450.8px;top:410px;width:12px;height:12px;background:#fff;border-radius:3px;border:1px solid #1e6ff0"></div>
<div class="a" style="left:462px;top:406.5px;width:6px;height:6px;background:#f0141e;border-radius:3px"></div>
<svg style="left:472.7px;top:410px" width="12" height="12" viewBox="0 0 12 12"><circle cx="6" cy="6" r="5.8" fill="#4aa3f0"/><rect x="3" y="3.5" width="6" height="4.5" fill="none" stroke="#fff" stroke-width="1"/></svg>
<svg style="left:494.1px;top:409.5px" width="13" height="13" viewBox="0 0 13 13"><rect x="0" y="0" width="9.5" height="9.5" rx="1" fill="#eee"/><path d="M1.8 1.8 H7 M1.8 1.8 V6.5" stroke="#d83b01" stroke-width="1.2" stroke-dasharray="1 .8"/><circle cx="11.5" cy="7" r="1.1" fill="none" stroke="#2aa8f5" stroke-width=".8"/><circle cx="9" cy="11.5" r="1.1" fill="none" stroke="#2aa8f5" stroke-width=".8"/></svg>
<div class="a" style="left:433.1px;top:424px;width:4px;height:1.5px;background:#9aa0b4;border-radius:1px"></div>
<div class="a" style="left:454.9px;top:424px;width:4px;height:1.5px;background:#9aa0b4;border-radius:1px"></div>
<div class="a" style="left:476.8px;top:424px;width:4px;height:1.5px;background:#9aa0b4;border-radius:1px"></div>
<div class="a" style="left:498.6px;top:424px;width:4px;height:1.5px;background:#9aa0b4;border-radius:1px"></div>
<svg style="left:636px;top:413px" width="7" height="4" viewBox="0 0 7 4"><path d="M0.5 3.5 L3.5 0.5 L6.5 3.5" fill="none" stroke="#eee" stroke-width=".9"/></svg>
<div class="t" style="left:654.3px;top:412px;font-size:5.8px;color:#e8e8e8;transform:scaleX(0.9);transform-origin:left">ENG</div>
<svg style="left:676px;top:411px" width="9" height="8" viewBox="0 0 9 8"><path d="M0.5 3 Q4.5 -0.5 8.5 3 M2 4.7 Q4.5 2.5 7 4.7" fill="none" stroke="#eee" stroke-width=".9"/><circle cx="4.5" cy="6.6" r=".9" fill="#eee"/></svg>
<svg style="left:687px;top:411px" width="9" height="8" viewBox="0 0 9 8"><path d="M0.5 2.8 H2 L4 1 V7 L2 5.2 H0.5Z" fill="none" stroke="#eee" stroke-width=".8"/><path d="M5.5 2.5 Q6.5 4 5.5 5.5 M6.8 1.5 Q8.5 4 6.8 6.5" fill="none" stroke="#eee" stroke-width=".8"/></svg>
<div class="a" style="left:699px;top:412px;width:8px;height:5px;background:transparent;border:1px solid #eee;border-radius:1px"></div>
<div class="a" style="left:700.5px;top:413.5px;width:4px;height:2px;background:#eee"></div>
<div class="t" style="left:718px;top:409px;font-size:5.8px;color:#e8e8e8">4:32 PM</div>
<div class="t" style="left:716px;top:416.5px;font-size:5.8px;color:#e8e8e8">6/4/2024</div>
<svg style="left:744px;top:410px" width="8" height="9" viewBox="0 0 8 9"><path d="M4 0.5 Q7 0.5 7 4 V5.5 L7.8 7 H0.2 L1 5.5 V4 Q1 0.5 4 0.5Z" fill="none" stroke="#eee" stroke-width=".8"/></svg>
</div>
<!-- ============ THUMBS ============ -->
<div class="a" style="left:170px;top:714px;width:177px;height:100px;border-radius:8px;overflow:hidden;background:#f2f2f2;filter:blur(0.3px)"><div class="a" style="left:0;top:0;width:760px;height:427px;transform:scale(0.2329,0.2342);transform-origin:0 0"><div class="a" style="left:0px;top:0px;width:760px;height:19px;background:#202020"></div>
<div class="a" style="left:5px;top:3px;width:14px;height:14px;background:#2c2c2c;border-radius:5px"></div>
<svg style="left:9px;top:8px" width="7" height="5" viewBox="0 0 7 5"><path d="M1 1 L3.5 3.5 L6 1" fill="none" stroke="#ccc" stroke-width="1.2"/></svg>
<div class="a" style="left:20px;top:3px;width:116px;height:16px;background:#3c3c3c;border-radius:6px 6px 0 0"></div>
<div class="a" style="left:0px;top:19px;width:760px;height:24px;background:#3c3c3c"></div>
<div class="a" style="left:59px;top:22px;width:580px;height:18px;background:#282828;border-radius:9px"></div>
<div class="a" style="left:665px;top:26px;width:9px;height:9px;background:radial-gradient(circle at 35% 35%,#9cd0ff,#2a6ad0);border-radius:5px"></div>
<div class="a" style="left:727px;top:25px;width:10px;height:10px;background:#e8141b;border-radius:5px"></div><div class="a" style="left:0px;top:43px;width:752px;height:31px;background:#fff"></div>
<div class="a" style="left:752px;top:43px;width:8px;height:361px;background:#f1f1f1"></div>
<svg style="left:62.8px;top:44.1px" width="28" height="28" viewBox="0 0 28 28"><defs><linearGradient id="mlg" x1="0" y1="0" x2="0" y2="1"><stop offset="0" stop-color="#40e0f8"/><stop offset="1" stop-color="#3a8ef0"/></linearGradient></defs><path d="M9.14 3.58 A11.5 11.5 0 1 1 8.25 23.96" fill="none" stroke="url(#mlg)" stroke-width="1.2"/></svg>
<div class="t" style="left:63.8px;top:54.46px;font-size:8.8px;color:#19c8f2;font-weight:700;transform:scaleX(1.205);transform-origin:left">STC</div>
<div class="a" style="left:91px;top:46.9px;width:11.6px;height:5.9px;background:#e0262b"></div>
<div class="t" style="left:92px;top:46.92px;font-size:6px;color:#fff;font-weight:700;transform:scaleX(0.84);transform-origin:left">API.</div>
<div class="t" style="left:103.8px;top:46.19px;font-size:7.8px;color:#1a1a1a;font-weight:700;transform:scaleX(0.478);transform-origin:left">THANH TOÁN TỰ ĐỘNG ATM - MOMO</div>
<div class="t" style="left:90.7px;top:51.56px;font-size:19.5px;color:#17cdf6;font-weight:700;transform:scaleX(0.456);transform-origin:left">SIEUTHICODE.NET</div>
<div class="t" style="left:182.8px;top:55.7px;font-size:7.7px;color:#262626;transform:scaleX(0.83);transform-origin:left;-webkit-text-stroke:0.1px #262626">TRANG CHỦ</div>
<div class="t" style="left:231.4px;top:55.7px;font-size:7.7px;color:#262626;transform:scaleX(0.885);transform-origin:left;-webkit-text-stroke:0.1px #262626">DANH MỤC GAME</div>
<svg style="left:295px;top:58px" width="6" height="4" viewBox="0 0 6 4"><path d="M1 1 L3 3 L5 1" fill="none" stroke="#777" stroke-width=".9"/></svg>
<div class="t" style="left:309px;top:55.7px;font-size:7.7px;color:#262626;transform:scaleX(0.83);transform-origin:left;-webkit-text-stroke:0.1px #262626">TIN TỨC</div>
<div class="a" style="left:519px;top:49px;width:51px;height:17.5px;background:linear-gradient(90deg,#ec4899,#f0384a);border-radius:3px"></div>
<div class="a" style="left:524.5px;top:53.5px;width:8.5px;height:8.5px;background:#fff;border-radius:5px"></div>
<div class="t" style="left:528.2px;top:54.5px;font-size:6px;color:#ec4899;font-weight:700">$</div>
<div class="t" style="left:536.5px;top:54px;font-size:7.3px;color:#fff">Nạp tiền</div>
<svg style="left:578px;top:51px" width="11" height="12" viewBox="0 0 11 12"><path d="M5.5 1 Q9 1 9 5 V7.5 L10.3 9.3 H0.7 L2 7.5 V5 Q2 1 5.5 1Z M4 10.5 Q5.5 11.8 7 10.5" fill="none" stroke="#e02424" stroke-width="1.1"/></svg>
<div class="a" style="left:601px;top:50px;width:16.5px;height:17px;background:#fff;border-radius:4px;border:1px solid #eee"></div>
<div class="a" style="left:606.8px;top:53px;width:5px;height:5px;background:#e02424;border-radius:3px"></div>
<div class="a" style="left:605px;top:58.5px;width:8.6px;height:4px;background:#e02424;border-radius:4px 4px 1px 1px"></div>
<div class="t" style="left:622px;top:55px;font-size:7.1px;color:#e02424">Đăng nhập / Đăng ký</div><div class="a" style="left:753px;top:60px;width:6px;height:90px;background:#c1c1c1"></div><div class="a" style="left:0px;top:74px;width:752px;height:330px;background:#f2f2f2"></div>
<div class="a" style="left:67px;top:82px;width:197px;height:156px;background:#fff;border-radius:3px"></div>
<div class="a" style="left:78px;top:90px;width:55px;height:6px;background:#bbb"></div>
<div class="a" style="left:76px;top:110px;width:57px;height:17px;background:#e5262a;border-radius:2px"></div>
<div class="a" style="left:150px;top:116px;width:40px;height:5px;background:#ccc"></div>
<div class="a" style="left:200px;top:116px;width:50px;height:5px;background:#ccc"></div>
<div class="a" style="left:169px;top:140px;width:87px;height:88px;background:repeating-linear-gradient(180deg,#e5262a 0,#e5262a 9px,transparent 9px,transparent 17.5px)"></div>
<div class="a" style="left:275px;top:82px;width:412px;height:153px;background:linear-gradient(90deg,#1a2848 0%,#24406e 30%,#1c2a4a 55%,#1a2038 75%,#203040 100%)"></div>
<div class="a" style="left:275px;top:82px;width:250px;height:25px;background:linear-gradient(90deg,#2a5a3a,#a02828 45%,#2a6a2a 80%,transparent);opacity:.55"></div>
<div class="a" style="left:280px;top:90px;width:190px;height:145px;background:radial-gradient(ellipse,rgba(120,160,220,.35),transparent 70%)"></div>
<div class="t" style="left:340px;top:124.92px;font-size:16px;color:#f0d040;font-weight:700;transform:scaleX(1.129);transform-origin:left">SHOP NICK</div>
<div class="t" style="left:302px;top:138.06px;font-size:38px;color:#f2e418;font-weight:700;transform:scaleX(0.907);transform-origin:left">FREE FIRE</div>
<div class="a" style="left:337px;top:200px;width:82px;height:22px;background:#c82030"></div>
<div class="a" style="left:511px;top:92px;width:99px;height:143px;background:linear-gradient(180deg,#8a8a90 0%,#3a3a44 30%,#22222c 100%);border-radius:45% 45% 0 0"></div>
<div class="a" style="left:612px;top:88px;width:58px;height:147px;background:linear-gradient(180deg,#f0d020 0,#f0d020 18%,#2a8a3a 18%,#d8ecd8 65%,#c03030 100%);clip-path:polygon(50% 0,100% 100%,0 100%)"></div>
<div class="a" style="left:66px;top:256px;width:625px;height:51px;background:linear-gradient(90deg,#f7a030 0%,#f76a3a 30%,#f0305a 60%,#e8206a 100%)"></div>
<div class="a" style="left:223px;top:278px;width:150px;height:27px;background:#fff"></div>
<div class="a" style="left:74px;top:261px;width:60px;height:6px;background:#fde0a0"></div>
<div class="a" style="left:68px;top:313px;width:120px;height:91px;background:#fff;border:2px solid #f5a0a8;border-bottom:none"><div class="a" style="left:0px;top:0px;width:116px;height:48px;background:linear-gradient(100deg,#2a7a6a 0%,#6a3aa0 40%,#c050c0 70%,#8a40b0 100%)"></div><div class="a" style="left:28px;top:20px;width:52px;height:20px;background:#e8d020;opacity:.9;border-radius:2px"></div><div class="a" style="left:10px;top:5px;width:70px;height:8px;background:#f0f0d0;opacity:.55"></div><div class="a" style="left:6px;top:56px;width:40px;height:6px;background:#f08080"></div><div class="a" style="left:0px;top:79px;width:116px;height:12px;background:linear-gradient(90deg,#f76a3a,#f0305a)"></div></div>
<div class="a" style="left:192px;top:313px;width:120px;height:91px;background:#fff;border:2px solid #f5a0a8;border-bottom:none"><div class="a" style="left:0px;top:0px;width:116px;height:48px;background:linear-gradient(100deg,#2a7a6a 0%,#6a3aa0 40%,#c050c0 70%,#8a40b0 100%)"></div><div class="a" style="left:28px;top:20px;width:52px;height:20px;background:#e8d020;opacity:.9;border-radius:2px"></div><div class="a" style="left:10px;top:5px;width:70px;height:8px;background:#f0f0d0;opacity:.55"></div><div class="a" style="left:6px;top:56px;width:40px;height:6px;background:#f08080"></div><div class="a" style="left:0px;top:79px;width:116px;height:12px;background:linear-gradient(90deg,#f76a3a,#f0305a)"></div></div>
<div class="a" style="left:316px;top:313px;width:120px;height:91px;background:#fff;border:2px solid #f5a0a8;border-bottom:none"><div class="a" style="left:0px;top:0px;width:116px;height:48px;background:linear-gradient(100deg,#2a7a6a 0%,#6a3aa0 40%,#c050c0 70%,#8a40b0 100%)"></div><div class="a" style="left:28px;top:20px;width:52px;height:20px;background:#e8d020;opacity:.9;border-radius:2px"></div><div class="a" style="left:10px;top:5px;width:70px;height:8px;background:#f0f0d0;opacity:.55"></div><div class="a" style="left:6px;top:56px;width:40px;height:6px;background:#f08080"></div><div class="a" style="left:0px;top:79px;width:116px;height:12px;background:linear-gradient(90deg,#f76a3a,#f0305a)"></div></div>
<div class="a" style="left:440px;top:313px;width:120px;height:91px;background:#fff;border:2px solid #f5a0a8;border-bottom:none"><div class="a" style="left:0px;top:0px;width:116px;height:48px;background:linear-gradient(100deg,#2a7a6a 0%,#6a3aa0 40%,#c050c0 70%,#8a40b0 100%)"></div><div class="a" style="left:28px;top:20px;width:52px;height:20px;background:#e8d020;opacity:.9;border-radius:2px"></div><div class="a" style="left:10px;top:5px;width:70px;height:8px;background:#f0f0d0;opacity:.55"></div><div class="a" style="left:6px;top:56px;width:40px;height:6px;background:#f08080"></div><div class="a" style="left:0px;top:79px;width:116px;height:12px;background:linear-gradient(90deg,#f76a3a,#f0305a)"></div></div>
<div class="a" style="left:564px;top:313px;width:120px;height:91px;background:#fff;border:2px solid #f5a0a8;border-bottom:none"><div class="a" style="left:0px;top:0px;width:116px;height:48px;background:linear-gradient(100deg,#2a7a6a 0%,#6a3aa0 40%,#c050c0 70%,#8a40b0 100%)"></div><div class="a" style="left:28px;top:20px;width:52px;height:20px;background:#e8d020;opacity:.9;border-radius:2px"></div><div class="a" style="left:10px;top:5px;width:70px;height:8px;background:#f0f0d0;opacity:.55"></div><div class="a" style="left:6px;top:56px;width:40px;height:6px;background:#f08080"></div><div class="a" style="left:0px;top:79px;width:116px;height:12px;background:linear-gradient(90deg,#f76a3a,#f0305a)"></div></div><div class="a" style="left:707px;top:213px;width:23px;height:23px;background:#e02424;border-radius:12px"></div><div class="a" style="left:707px;top:242px;width:23px;height:23px;background:#fff;border-radius:12px;border:3px solid #c34fe0"></div><div class="a" style="left:707px;top:271px;width:23px;height:23px;background:#4aa3f0;border-radius:12px"></div><div class="a" style="left:707px;top:334px;width:21px;height:21px;background:#f00;border-radius:11px"></div><div class="a" style="left:0px;top:404px;width:760px;height:23px;background:linear-gradient(90deg,#1b1f2b 0%,#1b1f2b 20%,#13205a 38%,#10225e 55%,#13205a 70%,#1b1f2b 85%)"></div>
<div class="a" style="left:258px;top:409px;width:255px;height:12px;background:repeating-linear-gradient(90deg,#5ab0f0 0,#5ab0f0 12px,transparent 12px,transparent 21.5px);opacity:.85"></div>
<div class="a" style="left:640px;top:411px;width:110px;height:8px;background:repeating-linear-gradient(90deg,#ccc 0,#ccc 10px,transparent 10px,transparent 16px);opacity:.5"></div></div></div>
<div class="a" style="left:357px;top:714px;width:178.5px;height:100px;border-radius:8px;overflow:hidden;background:#f2f2f2;filter:blur(0.3px)"><div class="a" style="left:0;top:0;width:760px;height:427px;transform:scale(0.2349,0.2342);transform-origin:0 0"><div class="a" style="left:0px;top:0px;width:760px;height:19px;background:#202020"></div>
<div class="a" style="left:5px;top:3px;width:14px;height:14px;background:#2c2c2c;border-radius:5px"></div>
<svg style="left:9px;top:8px" width="7" height="5" viewBox="0 0 7 5"><path d="M1 1 L3.5 3.5 L6 1" fill="none" stroke="#ccc" stroke-width="1.2"/></svg>
<div class="a" style="left:20px;top:3px;width:116px;height:16px;background:#3c3c3c;border-radius:6px 6px 0 0"></div>
<svg style="left:26px;top:6px" width="10" height="10" viewBox="0 0 10 10"><circle cx="5" cy="5" r="4" fill="none" stroke="#bbb" stroke-width="1.1"/><path d="M3 2.5 Q5 4 3.5 6 M6 8 Q5.5 6 7.5 5.5" fill="none" stroke="#bbb" stroke-width="1"/></svg>
<div class="a" style="left:39px;top:5px;width:84px;height:12px;overflow:hidden"><div class="t" style="left:0px;top:2px;font-size:7px;color:#d8d8d8;letter-spacing:-0.15px">Shop acc game liên quân uy tín</div></div>
<div class="a" style="left:108px;top:5px;width:16px;height:12px;background:linear-gradient(90deg,rgba(60,60,60,0),#3c3c3c)"></div>
<svg style="left:128px;top:8px" width="6" height="6" viewBox="0 0 6 6"><path d="M0.5 0.5 L5.5 5.5 M5.5 0.5 L0.5 5.5" stroke="#ddd" stroke-width="1.1"/></svg>
<svg style="left:144px;top:7px" width="8" height="8" viewBox="0 0 8 8"><path d="M4 0.5 V7.5 M0.5 4 H7.5" stroke="#ccc" stroke-width="1.1"/></svg>
<div class="a" style="left:698px;top:10px;width:7px;height:1px;background:#4a4a4a"></div>
<div class="a" style="left:721px;top:7px;width:6px;height:6px;background:transparent;border:1px solid #4a4a4a"></div>
<svg style="left:740px;top:6px" width="8" height="8" viewBox="0 0 8 8"><path d="M0.5 0.5 L7.5 7.5 M7.5 0.5 L0.5 7.5" stroke="#555" stroke-width="1"/></svg>
<div class="a" style="left:0px;top:19px;width:760px;height:24px;background:#3c3c3c"></div>
<svg style="left:6px;top:26px" width="10" height="9" viewBox="0 0 10 9"><path d="M9 4.5 H1.5 M4.5 1 L1 4.5 L4.5 8" fill="none" stroke="#ccc" stroke-width="1.2"/></svg>
<svg style="left:24px;top:26px" width="10" height="9" viewBox="0 0 10 9"><path d="M1 4.5 H8.5 M5.5 1 L9 4.5 L5.5 8" fill="none" stroke="#888" stroke-width="1.2"/></svg>
<svg style="left:41px;top:25px" width="10" height="10" viewBox="0 0 10 10"><path d="M8.3 4.5 A3.8 3.8 0 1 1 7.2 2.3" fill="none" stroke="#ccc" stroke-width="1.2"/><path d="M8.5 0.8 V3.8 H5.5" fill="none" stroke="#ccc" stroke-width="1.2"/></svg>
<div class="a" style="left:59px;top:22px;width:580px;height:18px;background:#282828;border-radius:9px"></div>
<div class="a" style="left:61px;top:24px;width:14px;height:14px;background:#3a3a3a;border-radius:7px"></div>
<svg style="left:64px;top:27px" width="9" height="8" viewBox="0 0 9 8"><circle cx="2" cy="2" r="1.2" fill="none" stroke="#ddd" stroke-width=".9"/><path d="M4 2 H8 M1 6 H5" stroke="#ddd" stroke-width=".9"/><circle cx="7" cy="6" r="1.2" fill="none" stroke="#ddd" stroke-width=".9"/></svg>
<div class="t" style="left:77.5px;top:27px;font-size:6.8px;color:#e0e0e0">shopnick.fteach.site</div>
<svg style="left:622px;top:26px" width="10" height="10" viewBox="0 0 10 10"><path d="M5 0.8 L6.2 3.7 L9.3 3.9 L6.9 5.9 L7.7 9 L5 7.3 L2.3 9 L3.1 5.9 L0.7 3.9 L3.8 3.7Z" fill="none" stroke="#ddd" stroke-width="1"/></svg>
<svg style="left:647px;top:28px" width="10" height="7" viewBox="0 0 10 7"><path d="M2.5 0.5 Q1 0.5 1 2 V3 Q1 3.5 0.3 3.5 Q1 3.5 1 4 V5 Q1 6.5 2.5 6.5 M7.5 0.5 Q9 0.5 9 2 V3 Q9 3.5 9.7 3.5 Q9 3.5 9 4 V5 Q9 6.5 7.5 6.5" fill="none" stroke="#888" stroke-width=".8"/></svg>
<div class="a" style="left:665px;top:26px;width:9px;height:9px;background:radial-gradient(circle at 35% 35%,#9cd0ff,#2a6ad0);border-radius:5px"></div>
<svg style="left:682px;top:26px" width="10" height="9" viewBox="0 0 10 9"><path d="M0.3 0.3 H2.5 L5 5 L7.5 0.3 H9.7 L5 8.7Z" fill="#3fbf7f"/></svg>
<svg style="left:700px;top:25px" width="11" height="11" viewBox="0 0 11 11"><path d="M1 2.5 H3.5 V1.5 Q3.5 0.5 4.8 0.5 Q6 0.5 6 1.5 V2.5 H8.5 V5 Q10.3 5 10.3 6.2 Q10.3 7.5 8.5 7.5 V10 H1 V7.5 Q2.5 7.5 2.5 6.2 Q2.5 5 1 5Z" fill="none" stroke="#ccc" stroke-width=".9"/></svg>
<div class="a" style="left:718px;top:26px;width:1px;height:9px;background:#555"></div>
<div class="a" style="left:727px;top:25px;width:10px;height:10px;background:#e8141b;border-radius:5px"></div>
<svg style="left:729px;top:27px" width="6" height="6" viewBox="0 0 6 6"><path d="M5 0.5 H2.5 L1.5 3 H3.5 L2.8 5.5" fill="none" stroke="#ffc21a" stroke-width="1.1"/></svg>
<svg style="left:748px;top:26px" width="3" height="10" viewBox="0 0 3 10"><circle cx="1.5" cy="1.5" r="1" fill="#ccc"/><circle cx="1.5" cy="5" r="1" fill="#ccc"/><circle cx="1.5" cy="8.5" r="1" fill="#ccc"/></svg>
<div class="a" style="left:0px;top:43px;width:752px;height:31px;background:#fff"></div>
<div class="a" style="left:752px;top:43px;width:8px;height:361px;background:#f1f1f1"></div>
<svg style="left:62.8px;top:44.1px" width="28" height="28" viewBox="0 0 28 28"><defs><linearGradient id="mlg" x1="0" y1="0" x2="0" y2="1"><stop offset="0" stop-color="#40e0f8"/><stop offset="1" stop-color="#3a8ef0"/></linearGradient></defs><path d="M9.14 3.58 A11.5 11.5 0 1 1 8.25 23.96" fill="none" stroke="url(#mlg)" stroke-width="1.2"/></svg>
<div class="t" style="left:63.8px;top:54.46px;font-size:8.8px;color:#19c8f2;font-weight:700;transform:scaleX(1.205);transform-origin:left">STC</div>
<div class="a" style="left:91px;top:46.9px;width:11.6px;height:5.9px;background:#e0262b"></div>
<div class="t" style="left:92px;top:46.92px;font-size:6px;color:#fff;font-weight:700;transform:scaleX(0.84);transform-origin:left">API.</div>
<div class="t" style="left:103.8px;top:46.19px;font-size:7.8px;color:#1a1a1a;font-weight:700;transform:scaleX(0.478);transform-origin:left">THANH TOÁN TỰ ĐỘNG ATM - MOMO</div>
<div class="t" style="left:90.7px;top:51.56px;font-size:19.5px;color:#17cdf6;font-weight:700;transform:scaleX(0.456);transform-origin:left">SIEUTHICODE.NET</div>
<div class="t" style="left:182.8px;top:55.7px;font-size:7.7px;color:#262626;transform:scaleX(0.83);transform-origin:left;-webkit-text-stroke:0.1px #262626">TRANG CHỦ</div>
<div class="t" style="left:231.4px;top:55.7px;font-size:7.7px;color:#262626;transform:scaleX(0.885);transform-origin:left;-webkit-text-stroke:0.1px #262626">DANH MỤC GAME</div>
<svg style="left:295px;top:58px" width="6" height="4" viewBox="0 0 6 4"><path d="M1 1 L3 3 L5 1" fill="none" stroke="#777" stroke-width=".9"/></svg>
<div class="t" style="left:309px;top:55.7px;font-size:7.7px;color:#262626;transform:scaleX(0.83);transform-origin:left;-webkit-text-stroke:0.1px #262626">TIN TỨC</div>
<div class="a" style="left:519px;top:49px;width:51px;height:17.5px;background:linear-gradient(90deg,#ec4899,#f0384a);border-radius:3px"></div>
<div class="a" style="left:524.5px;top:53.5px;width:8.5px;height:8.5px;background:#fff;border-radius:5px"></div>
<div class="t" style="left:528.2px;top:54.5px;font-size:6px;color:#ec4899;font-weight:700">$</div>
<div class="t" style="left:536.5px;top:54px;font-size:7.3px;color:#fff">Nạp tiền</div>
<svg style="left:578px;top:51px" width="11" height="12" viewBox="0 0 11 12"><path d="M5.5 1 Q9 1 9 5 V7.5 L10.3 9.3 H0.7 L2 7.5 V5 Q2 1 5.5 1Z M4 10.5 Q5.5 11.8 7 10.5" fill="none" stroke="#e02424" stroke-width="1.1"/></svg>
<div class="a" style="left:601px;top:50px;width:16.5px;height:17px;background:#fff;border-radius:4px;border:1px solid #eee"></div>
<div class="a" style="left:606.8px;top:53px;width:5px;height:5px;background:#e02424;border-radius:3px"></div>
<div class="a" style="left:605px;top:58.5px;width:8.6px;height:4px;background:#e02424;border-radius:4px 4px 1px 1px"></div>
<div class="t" style="left:622px;top:55px;font-size:7.1px;color:#e02424">Đăng nhập / Đăng ký</div>
<div class="a" style="left:753px;top:127px;width:6px;height:78px;background:#c1c1c1"></div>
<svg style="left:753px;top:46px" width="6" height="4" viewBox="0 0 6 4"><path d="M0.5 3.5 L3 0.5 L5.5 3.5Z" fill="#888"/></svg>
<svg style="left:753px;top:398px" width="6" height="4" viewBox="0 0 6 4"><path d="M0.5 0.5 L3 3.5 L5.5 0.5Z" fill="#555"/></svg>
<svg style="left:69px;top:82px" width="7" height="9" viewBox="0 0 7 9"><path d="M3.5 0.3 Q6.8 3.5 6.6 5.8 Q6.4 8.8 3.5 8.8 Q0.5 8.8 0.4 5.8 Q0.4 4 2 2.5 Q2 4 3 4.2 Q3.3 2 3.5 0.3Z" fill="#f97316"/><path d="M3.5 5 Q5 6.2 4.8 7.3 Q4.5 8.3 3.5 8.3 Q2.3 8.3 2.3 7.2 Q2.4 6 3.5 5Z" fill="#fdba74"/></svg>
<div class="t" style="left:82px;top:81px;font-size:9.8px;color:#151515;font-weight:700;transform:scaleX(0.885);transform-origin:left">Tài Khoản Liên Minh Tuỳ Chọn</div>
<div class="t" style="left:66.7px;top:94.5px;font-size:6.85px;color:#6a6a6a">Với hàng ngàn tài khoản LMHT ngon, giá cả hợp lý - Là sự lựa chọn phù hợp cho bạn.</div>
<div class="a" style="left:646px;top:78.5px;width:39.5px;height:12px;background:#e5262a;border-radius:2px"></div>
<div class="t" style="left:651.5px;top:81.3px;font-size:6.2px;color:#fff;font-weight:700;transform:scaleX(0.95);transform-origin:left">Khám phá</div>
<div class="a" style="left:67.0px;top:110px;width:120.5px;height:112px;background:#fff;border-radius:3px;overflow:hidden"><div class="a" style="left:0;top:0;width:120.5px;height:79px;background:linear-gradient(100deg,#3a2a3a 0%,#6a4a5a 35%,#4a4a50 60%,#2a3a3a 100%);overflow:hidden"><div class="a" style="left:0px;top:0px;width:121px;height:79px;background:radial-gradient(ellipse at 25% 20%,#b06080 0%,transparent 50%)"></div><div class="a" style="left:62px;top:0px;width:59px;height:79px;background:linear-gradient(160deg,#1e2a2a,#3a6a5a 40%,#1a2a30 80%);border-radius:45% 0 0 0;opacity:.85"></div><div class="a" style="left:78px;top:5px;width:26px;height:26px;background:radial-gradient(circle,#0e1616 30%,transparent 70%)"></div><div class="t" style="left:20.8px;top:10.38px;font-size:12.5px;color:#fff;font-weight:700;transform:scaleX(0.576);transform-origin:left;text-shadow:0 0 1px #7a3a00,0 0 2px #5a2a00">MUA NICK</div><div class="t" style="left:11.9px;top:24.05px;font-size:15px;color:#f8cc20;font-weight:700;transform:scaleX(0.685);transform-origin:left;text-shadow:0 0 1px #7a3a00,0 0 2px #5a2a00">LIÊN MINH</div><div class="t" style="left:8.9px;top:40.31px;font-size:13px;color:#f8cc20;font-weight:700;transform:scaleX(0.632);transform-origin:left;text-shadow:0 0 1px #7a3a00,0 0 2px #5a2a00">SALE NỬA GIÁ</div><div class="a" style="left:14.9px;top:58.5px;width:43.6px;height:11.799999999999997px;background:linear-gradient(#fff0b0,#f5c050 60%,#e0a030);border-radius:2px;box-shadow:0 0 0 1px #7a4a10"></div><div class="t" style="left:21.88px;top:59.93px;font-size:9px;color:#2a1a00;font-weight:700;transform:scaleX(0.62);transform-origin:left">MUA NGAY</div><div class="a" style="left:106px;top:-1px;width:15px;height:20px;background:linear-gradient(#e83a4a,#b81c30);clip-path:polygon(0 0,100% 0,100% 100%,50% 80%,0 100%)"></div><div class="a" style="left:106px;top:-1px;width:15px;height:2.5px;background:#f5c518"></div><div class="t" style="left:107.2px;top:5.5px;font-size:5.5px;color:#f5d000;font-weight:700;transform:scaleX(0.75);transform-origin:left">NEW</div></div><div class="t" style="left:6px;top:87px;font-size:7px;color:#2a2a2a;-webkit-text-stroke:0.15px #2a2a2a">Tài Khoản Liên Minh Huyền Thoại</div><div class="t" style="left:6px;top:99.5px;font-size:5.9px;color:#555">Tài khoản hiện có: <span style="color:#e8242a">0</span></div></div>
<div class="a" style="left:191.4px;top:110px;width:120.5px;height:112px;background:#fff;border-radius:3px;overflow:hidden"><div class="a" style="left:0;top:0;width:120.5px;height:79px;background:linear-gradient(110deg,#1aa060 0%,#2a7aa0 25%,#4a4a9a 50%,#8a3aa0 75%,#6a3a90 100%);overflow:hidden"><div class="a" style="left:62px;top:0px;width:59px;height:79px;background:radial-gradient(ellipse at 55% 50%,#f080f0 0%,#b050d0 35%,transparent 72%)"></div><div class="a" style="left:0px;top:52px;width:40px;height:27px;background:radial-gradient(circle at 40% 60%,#7a6ae0,transparent 70%)"></div><div class="t" style="left:4px;top:10.29px;font-size:17px;color:#fff;font-weight:700;transform:scaleX(0.563);transform-origin:left;text-shadow:0 0 1px #7a3a00,0 0 2px #5a2a00">RANDOM ĐTCL</div><div class="t" style="left:24.8px;top:28.96px;font-size:8px;color:#fff;font-weight:700;transform:scaleX(0.613);transform-origin:left;text-shadow:0 0 1px #7a3a00,0 0 2px #5a2a00">NOBILE - PC</div><div class="t" style="left:15.9px;top:36.47px;font-size:31px;color:#f8d800;font-weight:700;transform:scaleX(0.641);transform-origin:left;text-shadow:0 0 1px #7a3a00,0 0 2px #5a2a00">200K</div><div class="a" style="left:106px;top:-1px;width:15px;height:20px;background:linear-gradient(#e83a4a,#b81c30);clip-path:polygon(0 0,100% 0,100% 100%,50% 80%,0 100%)"></div><div class="a" style="left:106px;top:-1px;width:15px;height:2.5px;background:#f5c518"></div><div class="t" style="left:107.2px;top:5.5px;font-size:5.5px;color:#f5d000;font-weight:700;transform:scaleX(0.75);transform-origin:left">NEW</div></div><div class="t" style="left:6px;top:87px;font-size:7px;color:#2a2a2a;-webkit-text-stroke:0.15px #2a2a2a">Vận May ĐTCL Trúng Pet Tím</div><div class="t" style="left:6px;top:99.5px;font-size:5.9px;color:#555">Tài khoản hiện có: <span style="color:#e8242a">147</span></div></div>
<div class="a" style="left:315.8px;top:110px;width:120.5px;height:112px;background:#fff;border-radius:3px;overflow:hidden"><div class="a" style="left:0;top:0;width:120.5px;height:79px;background:linear-gradient(120deg,#2a80d0 0%,#5ac0f0 35%,#a0e0f8 55%,#60b0e0 75%,#3a5a9a 100%);overflow:hidden"><div class="a" style="left:72px;top:0px;width:49px;height:79px;background:linear-gradient(160deg,#d8a878 0%,#b07050 40%,#6a2a30 70%,#3a2a40 100%);border-radius:45% 0 0 0"></div><div class="a" style="left:0px;top:40px;width:70px;height:39px;background:radial-gradient(ellipse at 50% 80%,#f0f8ff,transparent 70%)"></div><div class="a" style="left:5px;top:0px;width:20px;height:20px;background:radial-gradient(circle,#8a7a40,transparent 70%)"></div><div class="t" style="left:5.3px;top:19.38px;font-size:12.5px;color:#f8e060;font-weight:700;transform:scaleX(0.603);transform-origin:left;text-shadow:0 0 1px #7a3a00,0 0 2px #5a2a00">THỬ VẬN MAY LMHT</div><div class="t" style="left:13.3px;top:39.57px;font-size:11px;color:#fff;font-weight:700;transform:scaleX(0.728);transform-origin:left;text-shadow:0 0 1px #7a3a00,0 0 2px #5a2a00">CHỈ</div><div class="t" style="left:28.1px;top:30.73px;font-size:29px;color:#f8d800;font-weight:700;transform:scaleX(0.6);transform-origin:left;text-shadow:0 0 1px #7a3a00,0 0 2px #5a2a00">100K</div><div class="a" style="left:106px;top:-1px;width:15px;height:20px;background:linear-gradient(#e83a4a,#b81c30);clip-path:polygon(0 0,100% 0,100% 100%,50% 80%,0 100%)"></div><div class="a" style="left:106px;top:-1px;width:15px;height:2.5px;background:#f5c518"></div><div class="t" style="left:107.2px;top:5.5px;font-size:5.5px;color:#f5d000;font-weight:700;transform:scaleX(0.75);transform-origin:left">NEW</div></div><div class="t" style="left:6px;top:87px;font-size:7px;color:#2a2a2a;-webkit-text-stroke:0.15px #2a2a2a">Vận May Liên Minh 100k</div><div class="t" style="left:6px;top:99.5px;font-size:5.9px;color:#555">Tài khoản hiện có: <span style="color:#e8242a">0</span></div></div>
<div class="a" style="left:440.20000000000005px;top:110px;width:120.5px;height:112px;background:#fff;border-radius:3px;overflow:hidden"><div class="a" style="left:0;top:0;width:120.5px;height:79px;background:linear-gradient(100deg,#3a3040 0%,#5a5060 30%,#2a4a48 55%,#1e2e30 80%,#2a2a30 100%);overflow:hidden"><div class="a" style="left:55px;top:0px;width:66px;height:79px;background:radial-gradient(ellipse at 45% 55%,#40d0c0 0%,#208a80 35%,transparent 70%)"></div><div class="a" style="left:78px;top:18px;width:30px;height:61px;background:linear-gradient(#2a2a30,#15151a);border-radius:40% 40% 0 0;opacity:.85"></div><div class="t" style="left:11.7px;top:11.38px;font-size:12.5px;color:#fff;font-weight:700;transform:scaleX(0.557);transform-origin:left;text-shadow:0 0 1px #7a3a00,0 0 2px #5a2a00">ACC LEVEL 30</div><div class="t" style="left:10.8px;top:24.55px;font-size:15px;color:#f8cc20;font-weight:700;transform:scaleX(0.685);transform-origin:left;text-shadow:0 0 1px #7a3a00,0 0 2px #5a2a00">LIÊN MINH</div><div class="t" style="left:10.8px;top:41.31px;font-size:13px;color:#f8cc20;font-weight:700;transform:scaleX(0.649);transform-origin:left;text-shadow:0 0 1px #7a3a00,0 0 2px #5a2a00">CHƯA RANK</div><div class="a" style="left:15.1px;top:58.8px;width:43.1px;height:12.100000000000009px;background:linear-gradient(#fff0b0,#f5c050 60%,#e0a030);border-radius:2px;box-shadow:0 0 0 1px #7a4a10"></div><div class="t" style="left:22.0px;top:60.29px;font-size:9px;color:#2a1a00;font-weight:700;transform:scaleX(0.613);transform-origin:left">MUA NGAY</div></div><div class="t" style="left:6px;top:87px;font-size:7px;color:#2a2a2a;-webkit-text-stroke:0.15px #2a2a2a">Tài Khoản Level 30 Chưa Rank</div><div class="t" style="left:6px;top:99.5px;font-size:5.9px;color:#555">Tài khoản hiện có: <span style="color:#e8242a">0</span></div></div>
<div class="a" style="left:564.6px;top:110px;width:120.5px;height:112px;background:#fff;border-radius:3px;overflow:hidden"><div class="a" style="left:0;top:0;width:120.5px;height:79px;background:linear-gradient(100deg,#3a2a3a 0%,#6a4a5a 35%,#4a4060 55%,#2a3050 100%);overflow:hidden"><div class="a" style="left:72px;top:0px;width:49px;height:79px;background:linear-gradient(170deg,#e04020 0%,#c03020 22%,#f0f0f0 42%,#3060c0 62%,#2a3a70 100%);border-radius:45% 0 0 0;opacity:.9"></div><div class="t" style="left:16.3px;top:11.38px;font-size:12.5px;color:#fff;font-weight:700;transform:scaleX(0.611);transform-origin:left;text-shadow:0 0 1px #7a3a00,0 0 2px #5a2a00">MUA NICK</div><div class="t" style="left:8.6px;top:24.55px;font-size:15px;color:#f8cc20;font-weight:700;transform:scaleX(0.685);transform-origin:left;text-shadow:0 0 1px #7a3a00,0 0 2px #5a2a00">LIÊN MINH</div><div class="t" style="left:12.9px;top:41.31px;font-size:13px;color:#f8cc20;font-weight:700;transform:scaleX(0.627);transform-origin:left;text-shadow:0 0 1px #7a3a00,0 0 2px #5a2a00">RANK CAO</div><div class="a" style="left:14.6px;top:58.8px;width:43.9px;height:12.100000000000009px;background:linear-gradient(#fff0b0,#f5c050 60%,#e0a030);border-radius:2px;box-shadow:0 0 0 1px #7a4a10"></div><div class="t" style="left:21.62px;top:60.29px;font-size:9px;color:#2a1a00;font-weight:700;transform:scaleX(0.624);transform-origin:left">MUA NGAY</div><div class="a" style="left:106px;top:-1px;width:15px;height:26px;background:linear-gradient(#e83a4a,#b81c30);clip-path:polygon(0 0,100% 0,100% 100%,50% 80%,0 100%)"></div><div class="a" style="left:106px;top:-1px;width:15px;height:2.5px;background:#f5c518"></div><div class="t" style="left:107.2px;top:5.5px;font-size:5.5px;color:#f5d000;font-weight:700;transform:scaleX(0.75);transform-origin:left">NEW</div></div><div class="t" style="left:6px;top:87px;font-size:7px;color:#2a2a2a;-webkit-text-stroke:0.15px #2a2a2a">Tài Khoản LMHT Rank Cao</div><div class="t" style="left:6px;top:99.5px;font-size:5.9px;color:#555">Tài khoản hiện có: <span style="color:#e8242a">0</span></div></div>
<svg style="left:69px;top:254.5px" width="7" height="9" viewBox="0 0 7 9"><path d="M3.5 0.3 Q6.8 3.5 6.6 5.8 Q6.4 8.8 3.5 8.8 Q0.5 8.8 0.4 5.8 Q0.4 4 2 2.5 Q2 4 3 4.2 Q3.3 2 3.5 0.3Z" fill="#f97316"/><path d="M3.5 5 Q5 6.2 4.8 7.3 Q4.5 8.3 3.5 8.3 Q2.3 8.3 2.3 7.2 Q2.4 6 3.5 5Z" fill="#fdba74"/></svg>
<div class="t" style="left:82px;top:253.5px;font-size:9.8px;color:#151515;font-weight:700;transform:scaleX(0.896);transform-origin:left">TÀI KHOẢN LIÊN QUÂN TÙY CHỌN</div>
<div class="t" style="left:66.7px;top:267px;font-size:6.85px;color:#6a6a6a">Với hàng ngàn tài khoản Liên Quân ngon, giá cả hợp lý - Là sự lựa chọn phù hợp cho bạn</div>
<div class="a" style="left:646px;top:251.5px;width:39.5px;height:11.5px;background:#e5262a;border-radius:2px"></div>
<div class="t" style="left:651.5px;top:254px;font-size:6.2px;color:#fff;font-weight:700;transform:scaleX(0.95);transform-origin:left">Khám phá</div>
<div class="a" style="left:67px;top:283px;width:120.5px;height:112px;background:#fff;border-radius:3px;overflow:hidden"><div class="a" style="left:0;top:0;width:120.5px;height:78.5px;background:linear-gradient(180deg,#2a90e0 0%,#40b8f5 50%,#2a7ad0 80%);overflow:hidden"><div class="a" style="left:0px;top:52px;width:121px;height:27px;background:linear-gradient(180deg,#40a0e0,#e8c890 45%,#f0d8a0 60%,#50b0e8)"></div><div class="a" style="left:62px;top:6px;width:50px;height:73px;background:linear-gradient(170deg,#f8e0a0 0%,#f0e8f0 35%,#c8a0e0 60%,#8a50c0 90%);border-radius:45% 45% 0 0"></div><div class="t" style="left:7.2px;top:14.44px;font-size:12px;color:#fff;font-weight:700;transform:scaleX(0.551);transform-origin:left;text-shadow:0 0 1px #7a3a00,0 0 2px #5a2a00">100% TRÚNG NICK</div><div class="t" style="left:1.8px;top:27.53px;font-size:19px;color:#f8cc20;font-weight:700;transform:scaleX(0.665);transform-origin:left;text-shadow:0 0 1px #7a3a00,0 0 2px #5a2a00">SIÊU PHẨM</div><div class="a" style="left:17.1px;top:53.1px;width:39.6px;height:11.7px;background:linear-gradient(#fff080,#f0b000);border-radius:6px"></div><div class="t" style="left:24px;top:54.33px;font-size:9px;color:#6a3a00;font-weight:700;transform:scaleX(0.543);transform-origin:left">MUA NGAY</div><div class="a" style="left:96px;top:-12px;width:15px;height:52px;background:linear-gradient(#e83040,#c01a28);transform:rotate(-45deg)"></div></div><div class="t" style="left:6px;top:86.5px;font-size:7px;color:#2a2a2a;transform:scaleX(0.97);transform-origin:left;-webkit-text-stroke:0.15px #2a2a2a">100% TRÚNG NICK SIÊU PHẨM</div><div class="t" style="left:6px;top:99.0px;font-size:5.9px;color:#555">Tài khoản hiện có: <span style="color:#e8242a">0</span></div></div>
<div class="a" style="left:192px;top:283px;width:120.5px;height:112px;background:#fff;border-radius:3px;overflow:hidden"><div class="a" style="left:0;top:0;width:120.5px;height:78.5px;background:linear-gradient(180deg,#2a90e0 0%,#40b8f5 50%,#2a7ad0 80%);overflow:hidden"><div class="a" style="left:0px;top:52px;width:121px;height:27px;background:linear-gradient(180deg,#40a0e0,#e8c890 45%,#f0d8a0 60%,#50b0e8)"></div><div class="a" style="left:72px;top:8px;width:49px;height:71px;background:linear-gradient(170deg,#d0e0f8 0%,#5a5aa0 35%,#2a2a5a 70%,#3a3a70 100%);border-radius:45% 45% 0 0"></div><div class="t" style="left:19.3px;top:14.44px;font-size:12px;color:#fff;font-weight:700;transform:scaleX(0.528);transform-origin:left;text-shadow:0 0 1px #7a3a00,0 0 2px #5a2a00">SHOP NICK</div><div class="t" style="left:2.2px;top:27.53px;font-size:19px;color:#f8cc20;font-weight:700;transform:scaleX(0.663);transform-origin:left;text-shadow:0 0 1px #7a3a00,0 0 2px #5a2a00">LIÊN QUÂN</div><div class="a" style="left:16.6px;top:53.1px;width:40.5px;height:11.7px;background:linear-gradient(#fff080,#f0b000);border-radius:6px"></div><div class="t" style="left:25px;top:54.33px;font-size:9px;color:#6a3a00;font-weight:700;transform:scaleX(0.572);transform-origin:left">TỰ CHỌN</div><div class="a" style="left:104.3px;top:-1px;width:16px;height:23.5px;background:linear-gradient(#e83040,#c01a28);clip-path:polygon(0 0,100% 0,100% 100%,50% 82%,0 100%)"></div><div class="t" style="left:106px;top:3px;font-size:5px;color:#fff;font-weight:700;transform:scaleX(0.7);transform-origin:left">GIẢM</div><div class="t" style="left:105px;top:9.5px;font-size:7px;color:#f5d000;font-weight:700;transform:scaleX(0.68);transform-origin:left">30%</div></div><div class="t" style="left:6px;top:86.5px;font-size:7px;color:#2a2a2a;transform:scaleX(0.97);transform-origin:left;-webkit-text-stroke:0.15px #2a2a2a">NICK LIÊN QUÂN TỰ CHỌN</div><div class="t" style="left:6px;top:99.0px;font-size:5.9px;color:#555">Tài khoản hiện có: <span style="color:#e8242a">23</span></div></div>
<div class="a" style="left:707px;top:213px;width:23px;height:23px;background:#e02424;border-radius:12px;box-shadow:0 0 0 2px rgba(224,36,36,0.22)"></div>
<svg style="left:713px;top:219px" width="11" height="11" viewBox="0 0 11 11"><path d="M2 0.8 L4 2.8 L3 4.3 Q4.5 6.8 6.7 8 L8.2 7 L10.2 9 L8.8 10.3 Q3 9.5 0.7 2.2Z" fill="#fff"/></svg>
<div class="a" style="left:707px;top:242px;width:23px;height:23px;background:#fff;border-radius:12px;border:2.5px solid #c45be0;box-shadow:0 0 0 1.5px rgba(196,91,224,0.25)"></div>
<svg style="left:712.5px;top:247.5px" width="12" height="12" viewBox="0 0 12 12"><path d="M6 0.8 Q11.2 0.8 11.2 5.6 Q11.2 10.4 6 10.4 Q5 10.4 4 10.1 L2 11.2 V9.2 Q0.8 7.9 0.8 5.6 Q0.8 0.8 6 0.8Z" fill="#4f7cf5"/><path d="M3 7 L5 4.8 L6.7 6 L9 4.3 L7 6.6 L5.3 5.4Z" fill="#fff"/></svg>
<div class="a" style="left:707px;top:271px;width:23px;height:23px;background:#4aa3f0;border-radius:12px;box-shadow:0 0 0 2px rgba(74,163,240,0.3)"></div>
<svg style="left:712px;top:276.5px" width="13" height="12" viewBox="0 0 13 12"><path d="M2.5 1 H10.5 Q12 1 12 2.5 V8 Q12 9.5 10.5 9.5 H4 L1.5 11 L2 9.3 Q1 9 1 8 V2.5 Q1 1 2.5 1Z" fill="none" stroke="#fff" stroke-width="1.3"/><path d="M3.5 4 H6 L3.5 7 H6" fill="none" stroke="#fff" stroke-width=".8"/></svg>
<div class="a" style="left:706.5px;top:334px;width:22px;height:22px;background:#f30e0e;border-radius:11px"></div>
<svg style="left:712px;top:339px" width="11" height="12" viewBox="0 0 11 12"><path d="M5.5 11 V1.5 M1.5 5.5 L5.5 1.5 L9.5 5.5" fill="none" stroke="#fff" stroke-width="1.6"/></svg>
<div class="a" style="left:0px;top:404px;width:760px;height:23px;background:linear-gradient(90deg,#1b1f2b 0%,#1b1f2b 20%,#13205a 38%,#10225e 55%,#13205a 70%,#1b1f2b 85%)"></div>
<svg style="left:254.1px;top:410px" width="12" height="12" viewBox="0 0 12 12"><rect x="0" y="0" width="5.6" height="5.6" fill="#4cc2ff"/><rect x="6.4" y="0" width="5.6" height="5.6" fill="#4cc2ff"/><rect x="0" y="6.4" width="5.6" height="5.6" fill="#2aa8f5"/><rect x="6.4" y="6.4" width="5.6" height="5.6" fill="#2aa8f5"/></svg>
<svg style="left:276.0px;top:410px" width="12" height="12" viewBox="0 0 12 12"><circle cx="5" cy="5" r="3.8" fill="none" stroke="#eee" stroke-width="1.3"/><path d="M7.8 7.8 L11 11" stroke="#eee" stroke-width="1.5"/></svg>
<svg style="left:297.3px;top:410px" width="13" height="12" viewBox="0 0 13 12"><rect x="3.5" y="0" width="9" height="8.5" fill="#eee"/><rect x="0" y="3.5" width="9" height="8.5" fill="#666"/></svg>
<svg style="left:319.2px;top:410px" width="13" height="12" viewBox="0 0 13 12"><rect x="0" y="0.5" width="13" height="11.5" fill="#ffcc40"/><rect x="2.5" y="7" width="8" height="5" fill="#1a86d8"/></svg>
<svg style="left:341.0px;top:410px" width="13" height="13" viewBox="0 0 13 13"><circle cx="6.5" cy="6.5" r="6" fill="#2fa8e0"/><circle cx="7.5" cy="7" r="2.3" fill="#10225e"/><path d="M1 8 Q3 13 8 12.5 Q11 12 12 9" fill="#0c59a4"/></svg>
<svg style="left:363.4px;top:409px" width="12" height="13" viewBox="0 0 12 13"><rect x="0" y="2" width="12" height="11" rx="1.5" fill="#f0f0f0"/><rect x="3.5" y="5" width="2.2" height="2.2" fill="#f25022"/><rect x="6.3" y="5" width="2.2" height="2.2" fill="#7fba00"/><rect x="3.5" y="7.8" width="2.2" height="2.2" fill="#00a4ef"/><rect x="6.3" y="7.8" width="2.2" height="2.2" fill="#ffb900"/></svg>
<svg style="left:385.8px;top:409px" width="11" height="13" viewBox="0 0 11 13"><path d="M5.5 0.5 L10.5 3.5 V9.5 L5.5 12.5 L0.5 9.5 V3.5Z" fill="#777"/><path d="M5.5 2.5 L2.5 9 L8 8.5Z" fill="#222"/></svg>
<div class="a" style="left:407.1px;top:410px;width:12px;height:12px;background:linear-gradient(45deg,#6a2af0,#1aa8f5)"></div>
<svg style="left:428.5px;top:409.5px" width="13" height="13" viewBox="0 0 13 13"><circle cx="6.5" cy="6.5" r="6" fill="#2ba24c"/><path d="M6.5 0.5 A6 6 0 0 1 11.7 3.5 H6.5 A3 3 0 0 0 3.9 5 L1.3 3.5 A6 6 0 0 1 6.5 0.5Z" fill="#e33b2e"/><path d="M11.7 3.5 A6 6 0 0 1 6.5 12.5 L9.1 8 A3 3 0 0 0 9.1 5Z" fill="#fcc934"/><circle cx="6.5" cy="6.5" r="2.6" fill="#fff"/><circle cx="6.5" cy="6.5" r="2" fill="#3a7ff0"/></svg>
<div class="a" style="left:450.8px;top:410px;width:12px;height:12px;background:#fff;border-radius:3px;border:1px solid #1e6ff0"></div>
<div class="a" style="left:462px;top:406.5px;width:6px;height:6px;background:#f0141e;border-radius:3px"></div>
<svg style="left:472.7px;top:410px" width="12" height="12" viewBox="0 0 12 12"><circle cx="6" cy="6" r="5.8" fill="#4aa3f0"/><rect x="3" y="3.5" width="6" height="4.5" fill="none" stroke="#fff" stroke-width="1"/></svg>
<svg style="left:494.1px;top:409.5px" width="13" height="13" viewBox="0 0 13 13"><rect x="0" y="0" width="9.5" height="9.5" rx="1" fill="#eee"/><path d="M1.8 1.8 H7 M1.8 1.8 V6.5" stroke="#d83b01" stroke-width="1.2" stroke-dasharray="1 .8"/><circle cx="11.5" cy="7" r="1.1" fill="none" stroke="#2aa8f5" stroke-width=".8"/><circle cx="9" cy="11.5" r="1.1" fill="none" stroke="#2aa8f5" stroke-width=".8"/></svg>
<div class="a" style="left:433.1px;top:424px;width:4px;height:1.5px;background:#9aa0b4;border-radius:1px"></div>
<div class="a" style="left:454.9px;top:424px;width:4px;height:1.5px;background:#9aa0b4;border-radius:1px"></div>
<div class="a" style="left:476.8px;top:424px;width:4px;height:1.5px;background:#9aa0b4;border-radius:1px"></div>
<div class="a" style="left:498.6px;top:424px;width:4px;height:1.5px;background:#9aa0b4;border-radius:1px"></div>
<svg style="left:636px;top:413px" width="7" height="4" viewBox="0 0 7 4"><path d="M0.5 3.5 L3.5 0.5 L6.5 3.5" fill="none" stroke="#eee" stroke-width=".9"/></svg>
<div class="t" style="left:654.3px;top:412px;font-size:5.8px;color:#e8e8e8;transform:scaleX(0.9);transform-origin:left">ENG</div>
<svg style="left:676px;top:411px" width="9" height="8" viewBox="0 0 9 8"><path d="M0.5 3 Q4.5 -0.5 8.5 3 M2 4.7 Q4.5 2.5 7 4.7" fill="none" stroke="#eee" stroke-width=".9"/><circle cx="4.5" cy="6.6" r=".9" fill="#eee"/></svg>
<svg style="left:687px;top:411px" width="9" height="8" viewBox="0 0 9 8"><path d="M0.5 2.8 H2 L4 1 V7 L2 5.2 H0.5Z" fill="none" stroke="#eee" stroke-width=".8"/><path d="M5.5 2.5 Q6.5 4 5.5 5.5 M6.8 1.5 Q8.5 4 6.8 6.5" fill="none" stroke="#eee" stroke-width=".8"/></svg>
<div class="a" style="left:699px;top:412px;width:8px;height:5px;background:transparent;border:1px solid #eee;border-radius:1px"></div>
<div class="a" style="left:700.5px;top:413.5px;width:4px;height:2px;background:#eee"></div>
<div class="t" style="left:718px;top:409px;font-size:5.8px;color:#e8e8e8">4:32 PM</div>
<div class="t" style="left:716px;top:416.5px;font-size:5.8px;color:#e8e8e8">6/4/2024</div>
<svg style="left:744px;top:410px" width="8" height="9" viewBox="0 0 8 9"><path d="M4 0.5 Q7 0.5 7 4 V5.5 L7.8 7 H0.2 L1 5.5 V4 Q1 0.5 4 0.5Z" fill="none" stroke="#eee" stroke-width=".8"/></svg></div></div>
<div class="a" style="left:546px;top:714px;width:177px;height:100px;border-radius:8px;overflow:hidden;background:#f2f2f2;filter:blur(0.3px)"><div class="a" style="left:0;top:0;width:760px;height:427px;transform:scale(0.2329,0.2342);transform-origin:0 0"><div class="a" style="left:0px;top:0px;width:760px;height:19px;background:#202020"></div>
<div class="a" style="left:5px;top:3px;width:14px;height:14px;background:#2c2c2c;border-radius:5px"></div>
<svg style="left:9px;top:8px" width="7" height="5" viewBox="0 0 7 5"><path d="M1 1 L3.5 3.5 L6 1" fill="none" stroke="#ccc" stroke-width="1.2"/></svg>
<div class="a" style="left:20px;top:3px;width:116px;height:16px;background:#3c3c3c;border-radius:6px 6px 0 0"></div>
<div class="a" style="left:0px;top:19px;width:760px;height:24px;background:#3c3c3c"></div>
<div class="a" style="left:59px;top:22px;width:580px;height:18px;background:#282828;border-radius:9px"></div>
<div class="a" style="left:665px;top:26px;width:9px;height:9px;background:radial-gradient(circle at 35% 35%,#9cd0ff,#2a6ad0);border-radius:5px"></div>
<div class="a" style="left:727px;top:25px;width:10px;height:10px;background:#e8141b;border-radius:5px"></div><div class="a" style="left:0px;top:43px;width:752px;height:31px;background:#fff"></div>
<div class="a" style="left:752px;top:43px;width:8px;height:361px;background:#f1f1f1"></div>
<svg style="left:62.8px;top:44.1px" width="28" height="28" viewBox="0 0 28 28"><defs><linearGradient id="mlg" x1="0" y1="0" x2="0" y2="1"><stop offset="0" stop-color="#40e0f8"/><stop offset="1" stop-color="#3a8ef0"/></linearGradient></defs><path d="M9.14 3.58 A11.5 11.5 0 1 1 8.25 23.96" fill="none" stroke="url(#mlg)" stroke-width="1.2"/></svg>
<div class="t" style="left:63.8px;top:54.46px;font-size:8.8px;color:#19c8f2;font-weight:700;transform:scaleX(1.205);transform-origin:left">STC</div>
<div class="a" style="left:91px;top:46.9px;width:11.6px;height:5.9px;background:#e0262b"></div>
<div class="t" style="left:92px;top:46.92px;font-size:6px;color:#fff;font-weight:700;transform:scaleX(0.84);transform-origin:left">API.</div>
<div class="t" style="left:103.8px;top:46.19px;font-size:7.8px;color:#1a1a1a;font-weight:700;transform:scaleX(0.478);transform-origin:left">THANH TOÁN TỰ ĐỘNG ATM - MOMO</div>
<div class="t" style="left:90.7px;top:51.56px;font-size:19.5px;color:#17cdf6;font-weight:700;transform:scaleX(0.456);transform-origin:left">SIEUTHICODE.NET</div>
<div class="t" style="left:182.8px;top:55.7px;font-size:7.7px;color:#262626;transform:scaleX(0.83);transform-origin:left;-webkit-text-stroke:0.1px #262626">TRANG CHỦ</div>
<div class="t" style="left:231.4px;top:55.7px;font-size:7.7px;color:#262626;transform:scaleX(0.885);transform-origin:left;-webkit-text-stroke:0.1px #262626">DANH MỤC GAME</div>
<svg style="left:295px;top:58px" width="6" height="4" viewBox="0 0 6 4"><path d="M1 1 L3 3 L5 1" fill="none" stroke="#777" stroke-width=".9"/></svg>
<div class="t" style="left:309px;top:55.7px;font-size:7.7px;color:#262626;transform:scaleX(0.83);transform-origin:left;-webkit-text-stroke:0.1px #262626">TIN TỨC</div>
<div class="a" style="left:519px;top:49px;width:51px;height:17.5px;background:linear-gradient(90deg,#ec4899,#f0384a);border-radius:3px"></div>
<div class="a" style="left:524.5px;top:53.5px;width:8.5px;height:8.5px;background:#fff;border-radius:5px"></div>
<div class="t" style="left:528.2px;top:54.5px;font-size:6px;color:#ec4899;font-weight:700">$</div>
<div class="t" style="left:536.5px;top:54px;font-size:7.3px;color:#fff">Nạp tiền</div>
<svg style="left:578px;top:51px" width="11" height="12" viewBox="0 0 11 12"><path d="M5.5 1 Q9 1 9 5 V7.5 L10.3 9.3 H0.7 L2 7.5 V5 Q2 1 5.5 1Z M4 10.5 Q5.5 11.8 7 10.5" fill="none" stroke="#e02424" stroke-width="1.1"/></svg>
<div class="a" style="left:601px;top:50px;width:16.5px;height:17px;background:#fff;border-radius:4px;border:1px solid #eee"></div>
<div class="a" style="left:606.8px;top:53px;width:5px;height:5px;background:#e02424;border-radius:3px"></div>
<div class="a" style="left:605px;top:58.5px;width:8.6px;height:4px;background:#e02424;border-radius:4px 4px 1px 1px"></div>
<div class="t" style="left:622px;top:55px;font-size:7.1px;color:#e02424">Đăng nhập / Đăng ký</div><div class="a" style="left:753px;top:60px;width:6px;height:90px;background:#c1c1c1"></div><div class="a" style="left:0px;top:74px;width:752px;height:330px;background:#f2f2f2"></div>
<div class="a" style="left:60px;top:84px;width:630px;height:220px;background:#fff;border-radius:3px"></div>
<div class="a" style="left:65px;top:88px;width:305px;height:172px;background:linear-gradient(180deg,#203070 0%,#3a4a9a 30%,#26306a 60%,#2a2a70 100%);border-radius:8px;overflow:hidden"></div>
<div class="a" style="left:180px;top:92px;width:120px;height:45px;background:radial-gradient(ellipse,#d8c0a0 0%,#a08070 35%,transparent 70%);opacity:.7"></div>
<div class="a" style="left:135px;top:138px;width:23px;height:27px;background:#4060c0;opacity:.62"></div>
<div class="a" style="left:161px;top:138px;width:23px;height:27px;background:#5080e0;opacity:.62"></div>
<div class="a" style="left:187px;top:138px;width:23px;height:27px;background:#e07040;opacity:.62"></div>
<div class="a" style="left:213px;top:138px;width:23px;height:27px;background:#e0a050;opacity:.62"></div>
<div class="a" style="left:239px;top:138px;width:23px;height:27px;background:#c050c0;opacity:.62"></div>
<div class="a" style="left:265px;top:138px;width:23px;height:27px;background:#d0d0f0;opacity:.62"></div>
<div class="a" style="left:291px;top:138px;width:23px;height:27px;background:#c050c0;opacity:.62"></div>
<div class="a" style="left:317px;top:138px;width:23px;height:27px;background:#4060c0;opacity:.62"></div>
<div class="a" style="left:343px;top:138px;width:23px;height:27px;background:#8a3a8a;opacity:.62"></div>
<div class="a" style="left:135px;top:168px;width:23px;height:27px;background:#e0a050;opacity:.62"></div>
<div class="a" style="left:161px;top:168px;width:23px;height:27px;background:#d0d0f0;opacity:.62"></div>
<div class="a" style="left:187px;top:168px;width:23px;height:27px;background:#f0c060;opacity:.62"></div>
<div class="a" style="left:213px;top:168px;width:23px;height:27px;background:#e0a050;opacity:.62"></div>
<div class="a" style="left:239px;top:168px;width:23px;height:27px;background:#c050c0;opacity:.62"></div>
<div class="a" style="left:265px;top:168px;width:23px;height:27px;background:#e07040;opacity:.62"></div>
<div class="a" style="left:291px;top:168px;width:23px;height:27px;background:#e07040;opacity:.62"></div>
<div class="a" style="left:317px;top:168px;width:23px;height:27px;background:#c050c0;opacity:.62"></div>
<div class="a" style="left:343px;top:168px;width:23px;height:27px;background:#f0c060;opacity:.62"></div>
<div class="a" style="left:135px;top:198px;width:23px;height:27px;background:#c050c0;opacity:.62"></div>
<div class="a" style="left:161px;top:198px;width:23px;height:27px;background:#d0d0f0;opacity:.62"></div>
<div class="a" style="left:187px;top:198px;width:23px;height:27px;background:#e07040;opacity:.62"></div>
<div class="a" style="left:213px;top:198px;width:23px;height:27px;background:#e0a050;opacity:.62"></div>
<div class="a" style="left:239px;top:198px;width:23px;height:27px;background:#8a3a8a;opacity:.62"></div>
<div class="a" style="left:265px;top:198px;width:23px;height:27px;background:#c050c0;opacity:.62"></div>
<div class="a" style="left:291px;top:198px;width:23px;height:27px;background:#f0c060;opacity:.62"></div>
<div class="a" style="left:317px;top:198px;width:23px;height:27px;background:#8a3a8a;opacity:.62"></div>
<div class="a" style="left:343px;top:198px;width:23px;height:27px;background:#e0a050;opacity:.62"></div>
<div class="a" style="left:135px;top:228px;width:23px;height:27px;background:#8a3a8a;opacity:.62"></div>
<div class="a" style="left:161px;top:228px;width:23px;height:27px;background:#8a3a8a;opacity:.62"></div>
<div class="a" style="left:187px;top:228px;width:23px;height:27px;background:#e07040;opacity:.62"></div>
<div class="a" style="left:213px;top:228px;width:23px;height:27px;background:#e0a050;opacity:.62"></div>
<div class="a" style="left:239px;top:228px;width:23px;height:27px;background:#f0c060;opacity:.62"></div>
<div class="a" style="left:265px;top:228px;width:23px;height:27px;background:#e0a050;opacity:.62"></div>
<div class="a" style="left:291px;top:228px;width:23px;height:27px;background:#d0d0f0;opacity:.62"></div>
<div class="a" style="left:317px;top:228px;width:23px;height:27px;background:#5080e0;opacity:.62"></div>
<div class="a" style="left:343px;top:228px;width:23px;height:27px;background:#a040a0;opacity:.62"></div>
<div class="a" style="left:70px;top:95px;width:60px;height:150px;background:#2a4090;opacity:.9"></div>
<div class="a" style="left:75px;top:100px;width:50px;height:20px;background:#f0c060;opacity:.5"></div>
<div class="a" style="left:70px;top:232px;width:75px;height:24px;background:#4a7af0;border-radius:8px"></div>
<div class="a" style="left:72px;top:243px;width:28px;height:9px;background:#e02020"></div>
<div class="a" style="left:65px;top:268px;width:305px;height:26px;background:repeating-linear-gradient(90deg,#2a2a50 0,#30407a 40px,#fff 40px,#fff 49px)"></div>
<div class="a" style="left:425px;top:96px;width:75px;height:5px;background:#f08080"></div>
<div class="a" style="left:380px;top:104px;width:43px;height:6px;background:#444"></div>
<div class="a" style="left:380px;top:119px;width:230px;height:29px;background:linear-gradient(90deg,#f5402a,#f5902a)"></div>
<div class="a" style="left:382px;top:136px;width:40px;height:6px;background:#fff;opacity:.8"></div>
<div class="a" style="left:560px;top:136px;width:45px;height:6px;background:#fff;opacity:.8"></div>
<div class="a" style="left:645px;top:124px;width:12px;height:10px;background:#666;border-radius:2px;opacity:.7"></div>
<div class="a" style="left:632px;top:138px;width:38px;height:3px;background:#aaa"></div>
<div class="a" style="left:380px;top:160px;width:60px;height:5px;background:#777"></div>
<div class="a" style="left:380px;top:172px;width:74px;height:74px;background:repeating-linear-gradient(180deg,#f0f0f0 0,#f0f0f0 17px,#fff 17px,#fff 18.5px)"></div>
<div class="a" style="left:384px;top:177.0px;width:25px;height:4px;background:#999"></div>
<div class="a" style="left:465px;top:177.0px;width:20px;height:4px;background:#bbb"></div>
<div class="a" style="left:384px;top:195.5px;width:25px;height:4px;background:#999"></div>
<div class="a" style="left:465px;top:195.5px;width:20px;height:4px;background:#bbb"></div>
<div class="a" style="left:384px;top:214.0px;width:25px;height:4px;background:#999"></div>
<div class="a" style="left:465px;top:214.0px;width:20px;height:4px;background:#bbb"></div>
<div class="a" style="left:384px;top:232.5px;width:25px;height:4px;background:#999"></div>
<div class="a" style="left:465px;top:232.5px;width:20px;height:4px;background:#bbb"></div>
<div class="a" style="left:382px;top:258px;width:173px;height:5px;background:#c89060;opacity:.75"></div>
<div class="a" style="left:380px;top:275px;width:308px;height:24px;background:#e5262a"></div>
<div class="a" style="left:520px;top:284px;width:30px;height:6px;background:#fff;opacity:.8"></div>
<div class="a" style="left:60px;top:312px;width:630px;height:92px;background:#fff"></div>
<div class="a" style="left:65px;top:322px;width:79px;height:5px;background:#777"></div>
<div class="a" style="left:65px;top:337px;width:118px;height:67px;background:linear-gradient(180deg,#2a3a80,#4a4aa0 50%,#6a5a90)"></div>
<div class="a" style="left:190px;top:337px;width:120px;height:67px;background:linear-gradient(90deg,#2a2a50,#4a3a70 50%,#8a6a80)"></div>
<div class="a" style="left:150px;top:339px;width:30px;height:7px;background:#e02020"></div>
<div class="a" style="left:278px;top:339px;width:30px;height:7px;background:#e02020"></div><div class="a" style="left:707px;top:213px;width:23px;height:23px;background:#e02424;border-radius:12px"></div><div class="a" style="left:707px;top:242px;width:23px;height:23px;background:#fff;border-radius:12px;border:3px solid #c34fe0"></div><div class="a" style="left:707px;top:271px;width:23px;height:23px;background:#4aa3f0;border-radius:12px"></div><div class="a" style="left:707px;top:334px;width:21px;height:21px;background:#f00;border-radius:11px"></div><div class="a" style="left:0px;top:404px;width:760px;height:23px;background:linear-gradient(90deg,#1b1f2b 0%,#1b1f2b 20%,#13205a 38%,#10225e 55%,#13205a 70%,#1b1f2b 85%)"></div>
<div class="a" style="left:258px;top:409px;width:255px;height:12px;background:repeating-linear-gradient(90deg,#5ab0f0 0,#5ab0f0 12px,transparent 12px,transparent 21.5px);opacity:.85"></div>
<div class="a" style="left:640px;top:411px;width:110px;height:8px;background:repeating-linear-gradient(90deg,#ccc 0,#ccc 10px,transparent 10px,transparent 16px);opacity:.5"></div></div></div>
<div class="a" style="left:733px;top:714px;width:178px;height:100px;border-radius:8px;overflow:hidden;background:#f2f2f2;filter:blur(0.3px)"><div class="a" style="left:0;top:0;width:760px;height:427px;transform:scale(0.2342,0.2342);transform-origin:0 0"><div class="a" style="left:0px;top:0px;width:760px;height:19px;background:#202020"></div>
<div class="a" style="left:5px;top:3px;width:14px;height:14px;background:#2c2c2c;border-radius:5px"></div>
<svg style="left:9px;top:8px" width="7" height="5" viewBox="0 0 7 5"><path d="M1 1 L3.5 3.5 L6 1" fill="none" stroke="#ccc" stroke-width="1.2"/></svg>
<div class="a" style="left:20px;top:3px;width:116px;height:16px;background:#3c3c3c;border-radius:6px 6px 0 0"></div>
<div class="a" style="left:0px;top:19px;width:760px;height:24px;background:#3c3c3c"></div>
<div class="a" style="left:59px;top:22px;width:580px;height:18px;background:#282828;border-radius:9px"></div>
<div class="a" style="left:665px;top:26px;width:9px;height:9px;background:radial-gradient(circle at 35% 35%,#9cd0ff,#2a6ad0);border-radius:5px"></div>
<div class="a" style="left:727px;top:25px;width:10px;height:10px;background:#e8141b;border-radius:5px"></div><div class="a" style="left:0px;top:43px;width:752px;height:31px;background:#fff"></div>
<div class="a" style="left:752px;top:43px;width:8px;height:361px;background:#f1f1f1"></div>
<svg style="left:62.8px;top:44.1px" width="28" height="28" viewBox="0 0 28 28"><defs><linearGradient id="mlg" x1="0" y1="0" x2="0" y2="1"><stop offset="0" stop-color="#40e0f8"/><stop offset="1" stop-color="#3a8ef0"/></linearGradient></defs><path d="M9.14 3.58 A11.5 11.5 0 1 1 8.25 23.96" fill="none" stroke="url(#mlg)" stroke-width="1.2"/></svg>
<div class="t" style="left:63.8px;top:54.46px;font-size:8.8px;color:#19c8f2;font-weight:700;transform:scaleX(1.205);transform-origin:left">STC</div>
<div class="a" style="left:91px;top:46.9px;width:11.6px;height:5.9px;background:#e0262b"></div>
<div class="t" style="left:92px;top:46.92px;font-size:6px;color:#fff;font-weight:700;transform:scaleX(0.84);transform-origin:left">API.</div>
<div class="t" style="left:103.8px;top:46.19px;font-size:7.8px;color:#1a1a1a;font-weight:700;transform:scaleX(0.478);transform-origin:left">THANH TOÁN TỰ ĐỘNG ATM - MOMO</div>
<div class="t" style="left:90.7px;top:51.56px;font-size:19.5px;color:#17cdf6;font-weight:700;transform:scaleX(0.456);transform-origin:left">SIEUTHICODE.NET</div>
<div class="t" style="left:182.8px;top:55.7px;font-size:7.7px;color:#262626;transform:scaleX(0.83);transform-origin:left;-webkit-text-stroke:0.1px #262626">TRANG CHỦ</div>
<div class="t" style="left:231.4px;top:55.7px;font-size:7.7px;color:#262626;transform:scaleX(0.885);transform-origin:left;-webkit-text-stroke:0.1px #262626">DANH MỤC GAME</div>
<svg style="left:295px;top:58px" width="6" height="4" viewBox="0 0 6 4"><path d="M1 1 L3 3 L5 1" fill="none" stroke="#777" stroke-width=".9"/></svg>
<div class="t" style="left:309px;top:55.7px;font-size:7.7px;color:#262626;transform:scaleX(0.83);transform-origin:left;-webkit-text-stroke:0.1px #262626">TIN TỨC</div>
<div class="a" style="left:519px;top:49px;width:51px;height:17.5px;background:linear-gradient(90deg,#ec4899,#f0384a);border-radius:3px"></div>
<div class="a" style="left:524.5px;top:53.5px;width:8.5px;height:8.5px;background:#fff;border-radius:5px"></div>
<div class="t" style="left:528.2px;top:54.5px;font-size:6px;color:#ec4899;font-weight:700">$</div>
<div class="t" style="left:536.5px;top:54px;font-size:7.3px;color:#fff">Nạp tiền</div>
<svg style="left:578px;top:51px" width="11" height="12" viewBox="0 0 11 12"><path d="M5.5 1 Q9 1 9 5 V7.5 L10.3 9.3 H0.7 L2 7.5 V5 Q2 1 5.5 1Z M4 10.5 Q5.5 11.8 7 10.5" fill="none" stroke="#e02424" stroke-width="1.1"/></svg>
<div class="a" style="left:601px;top:50px;width:16.5px;height:17px;background:#fff;border-radius:4px;border:1px solid #eee"></div>
<div class="a" style="left:606.8px;top:53px;width:5px;height:5px;background:#e02424;border-radius:3px"></div>
<div class="a" style="left:605px;top:58.5px;width:8.6px;height:4px;background:#e02424;border-radius:4px 4px 1px 1px"></div>
<div class="t" style="left:622px;top:55px;font-size:7.1px;color:#e02424">Đăng nhập / Đăng ký</div><div class="a" style="left:753px;top:60px;width:6px;height:90px;background:#c1c1c1"></div><div class="a" style="left:0px;top:74px;width:752px;height:330px;background:#f2f2f2"></div>
<div class="a" style="left:67px;top:82px;width:197px;height:156px;background:#fff;border-radius:3px"></div>
<div class="a" style="left:78px;top:90px;width:55px;height:6px;background:#bbb"></div>
<div class="a" style="left:76px;top:108px;width:57px;height:18px;background:#e5262a;border-radius:9px"></div>
<div class="a" style="left:150px;top:116px;width:40px;height:5px;background:#ccc"></div>
<div class="a" style="left:200px;top:116px;width:50px;height:5px;background:#ccc"></div>
<div class="a" style="left:169px;top:140px;width:87px;height:88px;background:repeating-linear-gradient(180deg,#e5262a 0,#e5262a 9px,transparent 9px,transparent 17.5px)"></div>
<div class="a" style="left:78px;top:140px;width:11px;height:90px;background:repeating-linear-gradient(180deg,#4a90e0 0,#4a90e0 10px,transparent 10px,transparent 17.5px);border-radius:5px"></div>
<div class="a" style="left:94px;top:143px;width:35px;height:85px;background:repeating-linear-gradient(180deg,#999 0,#999 4px,transparent 4px,transparent 17.5px)"></div>
<div class="a" style="left:275px;top:82px;width:412px;height:153px;background:linear-gradient(90deg,#1a2848 0%,#24406e 30%,#1c2a4a 55%,#1a2038 75%,#203040 100%)"></div>
<div class="a" style="left:275px;top:82px;width:250px;height:25px;background:linear-gradient(90deg,#2a5a3a,#a02828 45%,#2a6a2a 80%,transparent);opacity:.55"></div>
<div class="a" style="left:280px;top:90px;width:190px;height:145px;background:radial-gradient(ellipse,rgba(120,160,220,.35),transparent 70%)"></div>
<div class="t" style="left:340px;top:124.92px;font-size:16px;color:#f0d040;font-weight:700;transform:scaleX(1.129);transform-origin:left">SHOP NICK</div>
<div class="t" style="left:302px;top:138.06px;font-size:38px;color:#f2e418;font-weight:700;transform:scaleX(0.907);transform-origin:left">FREE FIRE</div>
<div class="a" style="left:337px;top:200px;width:82px;height:22px;background:#c82030"></div>
<div class="a" style="left:511px;top:92px;width:99px;height:143px;background:linear-gradient(180deg,#8a8a90 0%,#3a3a44 30%,#22222c 100%);border-radius:45% 45% 0 0"></div>
<div class="a" style="left:612px;top:88px;width:58px;height:147px;background:linear-gradient(180deg,#f0d020 0,#f0d020 18%,#2a8a3a 18%,#d8ecd8 65%,#c03030 100%);clip-path:polygon(50% 0,100% 100%,0 100%)"></div>
<div class="a" style="left:66px;top:256px;width:625px;height:51px;background:linear-gradient(90deg,#f7a030 0%,#f76a3a 30%,#f0305a 60%,#e8206a 100%)"></div>
<div class="a" style="left:223px;top:278px;width:150px;height:27px;background:#fff"></div>
<div class="a" style="left:74px;top:261px;width:60px;height:6px;background:#fde0a0"></div>
<div class="a" style="left:68px;top:313px;width:120px;height:91px;background:#fff;border:2px solid #f5a0a8;border-bottom:none"><div class="a" style="left:0px;top:0px;width:116px;height:48px;background:linear-gradient(100deg,#2a7a6a 0%,#6a3aa0 40%,#c050c0 70%,#8a40b0 100%)"></div><div class="a" style="left:28px;top:20px;width:52px;height:20px;background:#e8d020;opacity:.9;border-radius:2px"></div><div class="a" style="left:10px;top:5px;width:70px;height:8px;background:#f0f0d0;opacity:.55"></div><div class="a" style="left:6px;top:56px;width:40px;height:6px;background:#f08080"></div><div class="a" style="left:0px;top:79px;width:116px;height:12px;background:linear-gradient(90deg,#f76a3a,#f0305a)"></div></div>
<div class="a" style="left:192px;top:313px;width:120px;height:91px;background:#fff;border:2px solid #f5a0a8;border-bottom:none"><div class="a" style="left:0px;top:0px;width:116px;height:48px;background:linear-gradient(100deg,#2a7a6a 0%,#6a3aa0 40%,#c050c0 70%,#8a40b0 100%)"></div><div class="a" style="left:28px;top:20px;width:52px;height:20px;background:#e8d020;opacity:.9;border-radius:2px"></div><div class="a" style="left:10px;top:5px;width:70px;height:8px;background:#f0f0d0;opacity:.55"></div><div class="a" style="left:6px;top:56px;width:40px;height:6px;background:#f08080"></div><div class="a" style="left:0px;top:79px;width:116px;height:12px;background:linear-gradient(90deg,#f76a3a,#f0305a)"></div></div>
<div class="a" style="left:316px;top:313px;width:120px;height:91px;background:#fff;border:2px solid #f5a0a8;border-bottom:none"><div class="a" style="left:0px;top:0px;width:116px;height:48px;background:linear-gradient(100deg,#2a7a6a 0%,#6a3aa0 40%,#c050c0 70%,#8a40b0 100%)"></div><div class="a" style="left:28px;top:20px;width:52px;height:20px;background:#e8d020;opacity:.9;border-radius:2px"></div><div class="a" style="left:10px;top:5px;width:70px;height:8px;background:#f0f0d0;opacity:.55"></div><div class="a" style="left:6px;top:56px;width:40px;height:6px;background:#f08080"></div><div class="a" style="left:0px;top:79px;width:116px;height:12px;background:linear-gradient(90deg,#f76a3a,#f0305a)"></div></div>
<div class="a" style="left:440px;top:313px;width:120px;height:91px;background:#fff;border:2px solid #f5a0a8;border-bottom:none"><div class="a" style="left:0px;top:0px;width:116px;height:48px;background:linear-gradient(100deg,#2a7a6a 0%,#6a3aa0 40%,#c050c0 70%,#8a40b0 100%)"></div><div class="a" style="left:28px;top:20px;width:52px;height:20px;background:#e8d020;opacity:.9;border-radius:2px"></div><div class="a" style="left:10px;top:5px;width:70px;height:8px;background:#f0f0d0;opacity:.55"></div><div class="a" style="left:6px;top:56px;width:40px;height:6px;background:#f08080"></div><div class="a" style="left:0px;top:79px;width:116px;height:12px;background:linear-gradient(90deg,#f76a3a,#f0305a)"></div></div>
<div class="a" style="left:564px;top:313px;width:120px;height:91px;background:#fff;border:2px solid #f5a0a8;border-bottom:none"><div class="a" style="left:0px;top:0px;width:116px;height:48px;background:linear-gradient(100deg,#2a7a6a 0%,#6a3aa0 40%,#c050c0 70%,#8a40b0 100%)"></div><div class="a" style="left:28px;top:20px;width:52px;height:20px;background:#e8d020;opacity:.9;border-radius:2px"></div><div class="a" style="left:10px;top:5px;width:70px;height:8px;background:#f0f0d0;opacity:.55"></div><div class="a" style="left:6px;top:56px;width:40px;height:6px;background:#f08080"></div><div class="a" style="left:0px;top:79px;width:116px;height:12px;background:linear-gradient(90deg,#f76a3a,#f0305a)"></div></div><div class="a" style="left:707px;top:213px;width:23px;height:23px;background:#e02424;border-radius:12px"></div><div class="a" style="left:707px;top:242px;width:23px;height:23px;background:#fff;border-radius:12px;border:3px solid #c34fe0"></div><div class="a" style="left:707px;top:271px;width:23px;height:23px;background:#4aa3f0;border-radius:12px"></div><div class="a" style="left:707px;top:334px;width:21px;height:21px;background:#f00;border-radius:11px"></div><div class="a" style="left:0px;top:404px;width:760px;height:23px;background:linear-gradient(90deg,#1b1f2b 0%,#1b1f2b 20%,#13205a 38%,#10225e 55%,#13205a 70%,#1b1f2b 85%)"></div>
<div class="a" style="left:258px;top:409px;width:255px;height:12px;background:repeating-linear-gradient(90deg,#5ab0f0 0,#5ab0f0 12px,transparent 12px,transparent 21.5px);opacity:.85"></div>
<div class="a" style="left:640px;top:411px;width:110px;height:8px;background:repeating-linear-gradient(90deg,#ccc 0,#ccc 10px,transparent 10px,transparent 16px);opacity:.5"></div></div></div>
<div class="a" style="left:170px;top:739px;width:33px;height:50px;border-radius:16.5px;background:#334155;box-shadow:0 3px 8px rgba(0,0,0,0.12)"></div>
<svg style="left:180px;top:756px" width="14" height="16" viewBox="0 0 14 16"><path d="M10.5 2.5 L3.5 8 L10.5 13.5" fill="none" stroke="#fff" stroke-width="1.6"/></svg>
<div class="a" style="left:896px;top:739px;width:34px;height:50px;border-radius:17px;background:#334155;box-shadow:0 3px 8px rgba(0,0,0,0.12)"></div>
<svg style="left:906px;top:756px" width="14" height="16" viewBox="0 0 14 16"><path d="M3.5 2.5 L10.5 8 L3.5 13.5" fill="none" stroke="#fff" stroke-width="1.6"/></svg>
<!-- ============ FORM ============ -->
<div class="t" style="left:969.5px;top:265.8px;font-size:30.5px;font-weight:700;letter-spacing:-0.66px;color:#000">Shop bán acc game đa dạng</div>

<div class="t" style="left:969.5px;top:328px;font-size:23px;color:#ff4d4f">*</div>
<div class="t" style="left:984px;top:327px;font-size:18px;letter-spacing:-0.6px;color:#000000e0">Tài khoản shop:</div>
<div class="a inp" style="left:970px;top:359px;width:760px;height:49px"></div>
<div class="t ph" style="left:985px;top:374px">Tối thiểu 6 ký tự</div>

<div class="t" style="left:969.5px;top:446px;font-size:23px;color:#ff4d4f">*</div>
<div class="t" style="left:984px;top:445px;font-size:18px;letter-spacing:-0.6px;color:#000000e0">Mật khẩu shop:</div>
<div class="a inp" style="left:970px;top:477px;width:760px;height:49px"></div>
<div class="t ph" style="left:985px;top:492px">Nhập mật khẩu Admin</div>

<div class="t" style="left:969.5px;top:564px;font-size:23px;color:#ff4d4f">*</div>
<div class="t" style="left:984px;top:563px;font-size:18px;letter-spacing:-0.6px;color:#000000e0">Tên miền:</div>
<div class="a inp" style="left:970px;top:595px;width:370px;height:50px"></div>
<div class="t ph" style="left:985px;top:611px">Nhập tên miền</div>
<div class="a inp" style="left:1350px;top:595px;width:380px;height:50px;border-color:#1677ff;box-shadow:0 0 0 3px rgba(5,145,255,0.1)"></div>
<div class="t ph" style="left:1365px;top:611px">Loại miền</div>

<div class="t" style="left:969.5px;top:683px;font-size:23px;color:#ff4d4f">*</div>
<div class="t" style="left:984px;top:682px;font-size:18px;letter-spacing:-0.6px;color:#000000e0">Thời gian:</div>
<div class="a inp" style="left:970px;top:713px;width:760px;height:50px"></div>
<div class="t ph" style="left:985px;top:729px">Chọn tháng</div>

<div class="t" style="left:970px;top:798.7px;font-size:18px;letter-spacing:-0.6px;color:#000000e0">Mã Giảm Giá:</div>
<div class="a inp" style="left:970px;top:831px;width:760px;height:49px"></div>
<div class="t ph" style="left:985px;top:846px">Nhập mã giảm giá (nếu có)</div>

<div class="t" style="left:970px;top:920px;font-size:22px;color:#111;-webkit-text-stroke:0.45px #111;transform:scaleX(1.04);transform-origin:left">Tổng tiền:</div>
<div class="t" style="left:1697px;top:920px;font-size:22px;color:#ef3535;letter-spacing:0.5px">0 <u>đ</u></div>


<svg style="left:1694px;top:491px" width="21" height="20" viewBox="0 0 21 20"><path d="M1.5 10 Q10.5 1 19.5 10 Q10.5 19 1.5 10Z" fill="none" stroke="#6b6b6b" stroke-width="1.6"/><circle cx="10.5" cy="10" r="3.5" fill="none" stroke="#6b6b6b" stroke-width="1.6"/><path d="M17 1.5 L4 18.5" stroke="#6b6b6b" stroke-width="1.6"/></svg>
<svg style="left:1701px;top:613px" width="15" height="10" viewBox="0 0 15 10"><path d="M1 1.5 L7.5 8.5 L14 1.5" fill="none" stroke="#b0b0b0" stroke-width="1.4"/></svg>
<!-- ============ DROPDOWN ============ -->
<div class="a" style="left:1350px;top:650px;width:380px;height:249px;background:#fff;border-radius:10px;box-shadow:0 6px 16px 0 rgba(0,0,0,0.08),0 3px 6px -4px rgba(0,0,0,0.12),0 9px 28px 8px rgba(0,0,0,0.05)"></div>
<div class="a" style="left:1355px;top:654px;width:370px;height:40px;border-radius:6px;background:#f5f5f5"></div>
<div class="t dd" style="left:1370px;top:666px">.top (+60.000 <u>đ</u>)</div>
<div class="t dd" style="left:1370px;top:706px">.me (+160.000 <u>đ</u>)</div>
<div class="t dd" style="left:1370px;top:746px">.click (+60.000 <u>đ</u>)</div>
<div class="t dd" style="left:1370px;top:786px">.site (+30.000 <u>đ</u>)</div>
<div class="t dd" style="left:1370px;top:826px">.net (+300.000 <u>đ</u>)</div>
<div class="t dd" style="left:1370px;top:866px">.com (+300.000 <u>đ</u>)</div>

<!-- ============ SCROLLBAR ============ -->
<div class="a" style="left:1899px;top:99px;width:19px;height:869px;background:#f1f1f1"></div>
<div class="a" style="left:1901px;top:121px;width:17px;height:355px;background:#c1c1c1"></div>

<svg style="left:1903px;top:106px" width="12" height="8" viewBox="0 0 12 8"><path d="M1.5 7 L6 2 L10.5 7Z" fill="#a3a3a3"/></svg>
<svg style="left:1904px;top:953px" width="12" height="8" viewBox="0 0 12 8"><path d="M1.5 1 L6 6 L10.5 1Z" fill="#505050"/></svg>
<!-- ============ TASKBAR ============ -->
<div class="a" style="left:0;top:968px;width:1918px;height:59px;background:linear-gradient(90deg,#1c202d 0%,#1c202d 16.2%,#132056 19.8%,#111c5c 45%,#121f58 68.5%,#1c202d 73.8%,#1c202d 100%)"></div>
<div class="a" style="left:0;top:968px;width:1918px;height:1px;background:#3a3f50;opacity:.6"></div>
<!-- win -->
<svg style="left:614px;top:983px" width="30" height="30" viewBox="0 0 30 30"><defs><linearGradient id="wg" x1="0" y1="0" x2="1" y2="1"><stop offset="0" stop-color="#8fd8ff"/><stop offset="1" stop-color="#0fa0f0"/></linearGradient></defs><rect x="0.5" y="0.5" width="14" height="14" rx="1.5" fill="url(#wg)"/><rect x="15.5" y="0.5" width="14" height="14" rx="1.5" fill="url(#wg)"/><rect x="0.5" y="15.5" width="14" height="14" rx="1.5" fill="url(#wg)"/><rect x="15.5" y="15.5" width="14" height="14" rx="1.5" fill="url(#wg)"/></svg>
<!-- search -->
<svg style="left:672px;top:984px" width="28" height="28" viewBox="0 0 28 28"><circle cx="11.5" cy="11.5" r="9.5" fill="#454a8a" stroke="#e8e8ee" stroke-width="2.6"/><path d="M18.5 18.5 L26 26" stroke="#e8e8ee" stroke-width="3" stroke-linecap="round"/></svg>
<!-- taskview -->
<svg style="left:725px;top:983px" width="32" height="30" viewBox="0 0 32 30"><rect x="8" y="0.5" width="23" height="21" rx="2" fill="#f0f0f0"/><rect x="0.5" y="8" width="22" height="21.5" rx="2" fill="#707070" opacity=".9"/><rect x="8" y="8" width="14.5" height="13.5" fill="#c8c8c8"/></svg>
<!-- folder -->
<svg style="left:780px;top:984px" width="31" height="28" viewBox="0 0 31 28"><path d="M0.5 3 Q0.5 1 2.5 1 H9.5 L12.5 4 H28.5 Q30.5 4 30.5 6 V26.5 H0.5Z" fill="#f5b915"/><rect x="0.5" y="6" width="30" height="21" rx="1" fill="#ffd452"/><rect x="5.5" y="19" width="20" height="8.5" rx="2" fill="#1a86d8"/><path d="M10 22 H21" stroke="#0a4a90" stroke-width="1"/></svg>
<!-- edge -->
<svg style="left:835px;top:982px" width="31" height="31" viewBox="0 0 31 31"><defs><linearGradient id="eg1" x1="0" y1="0" x2="1" y2="1"><stop offset="0" stop-color="#35c1f1"/><stop offset=".5" stop-color="#2fa8e0"/><stop offset="1" stop-color="#66e08a"/></linearGradient></defs><circle cx="15.5" cy="15.5" r="15" fill="url(#eg1)"/><path d="M2 17 Q3 29 15.5 30.5 Q26 30 29 22 Q22 27 16 24 Q11 21 12.5 15 Q14 11 19 12.5 Q13 8 7 11 Q2.5 13.5 2 17Z" fill="#0c59a4"/><path d="M12.5 15.5 Q14 11 19 12.5 Q24 14 23.5 19 Q28 17 29.5 14 Q27 4 17 3 Q7 3 3 12 Q8 7 14 9 Q18 10 19 12.5" fill="#1b9de2" opacity=".8"/><ellipse cx="18.5" cy="17" rx="4.5" ry="3.8" fill="#0f1a5c"/></svg>
<!-- store -->
<svg style="left:890px;top:983px" width="30" height="30" viewBox="0 0 30 30"><path d="M8 6 V2 Q8 1 9 1 H21 Q22 1 22 2 V6" fill="none" stroke="#2ab0f0" stroke-width="2"/><rect x="0.5" y="5" width="29" height="24.5" rx="3" fill="#f5f5f5"/><rect x="9" y="11" width="5" height="5" fill="#f25022"/><rect x="15" y="11" width="5" height="5" fill="#7fba00"/><rect x="9" y="17" width="5" height="5" fill="#00a4ef"/><rect x="15" y="17" width="5" height="5" fill="#ffb900"/></svg>
<!-- hex -->
<svg style="left:948px;top:983px" width="27" height="30" viewBox="0 0 27 30"><defs><linearGradient id="hg" x1="0" y1="0" x2="1" y2="1"><stop offset="0" stop-color="#bbb"/><stop offset="1" stop-color="#333"/></linearGradient></defs><path d="M13.5 0.5 L26 7.5 V22.5 L13.5 29.5 L1 22.5 V7.5Z" fill="url(#hg)"/><path d="M13.5 4 L6 20 L20 19Z" fill="#222"/><path d="M13.5 4 L20 19 L23 16Z" fill="#999"/></svg>
<!-- MA -->
<svg style="left:1001px;top:983px" width="30" height="30" viewBox="0 0 30 30"><defs><linearGradient id="mg" x1="0" y1="1" x2="1" y2="0"><stop offset="0" stop-color="#6a2af0"/><stop offset="1" stop-color="#1aa8f5"/></linearGradient></defs><rect width="30" height="30" fill="url(#mg)"/><path d="M3 22 L12 7 H15 L6 22Z M10 22 L19 7 H22 L13 22Z" fill="#e8e8ff"/><path d="M19 14 L22 7 H23 V22 H20Z" fill="#fff" opacity=".9"/><circle cx="21.5" cy="20.5" r="1.6" fill="#fff"/></svg>
<!-- chrome -->
<div class="a" style="left:1046px;top:973px;width:50px;height:50px;border-radius:5px;background:rgba(255,255,255,0.07)"></div>
<svg style="left:1055px;top:982px" width="31" height="31" viewBox="0 0 31 31"><circle cx="15.5" cy="15.5" r="15" fill="#2ba24c"/><path d="M15.5 0.5 A15 15 0 0 1 28.5 8 H15.5 A7.5 7.5 0 0 0 9 11.75 L2.5 8 A15 15 0 0 1 15.5 0.5Z" fill="#e33b2e"/><path d="M28.5 8 A15 15 0 0 1 15.5 30.5 L22 19.25 A7.5 7.5 0 0 0 22 11.75 Z" fill="#fcc934"/><circle cx="15.5" cy="15.5" r="7" fill="#fff"/><circle cx="15.5" cy="15.5" r="5.5" fill="#3a7ff0"/></svg>
<div class="a" style="left:1061px;top:1018px;width:20px;height:4px;border-radius:2px;background:#4cc2ff"></div>
<!-- zalo -->
<svg style="left:1110px;top:983px" width="32" height="31" viewBox="0 0 32 31"><path d="M5 2 H25 Q30 2 30 8 V22 Q30 28 24 28 H10 Q6 30 2 29.5 Q5 27 3.5 24 Q1 21 1 16 V8 Q1 2 5 2Z" fill="#fff" stroke="#1e6ff0" stroke-width="1.6"/><text x="5" y="19" font-family="Liberation Sans" font-weight="700" font-size="10" fill="#1e6ff0">Zalo</text></svg>
<div class="a" style="left:1127px;top:977px;width:20px;height:20px;border-radius:10px;background:#f0141e"></div>
<div class="t" style="left:1129px;top:981px;font-size:12px;color:#fff;letter-spacing:-0.3px">5+</div>
<div class="a" style="left:1122px;top:1018px;width:8px;height:4px;border-radius:2px;background:#9aa0b4"></div>
<!-- elephant -->
<svg style="left:1166px;top:983px" width="29" height="30" viewBox="0 0 29 30"><path d="M14 1 Q26 1 27.5 12 Q28.5 20 25 26 Q24 29 21 29 Q19 29 19 25 V23 H12 V26 Q12 29 9 29 Q6 29 6 25 Q3 22 3 17 Q0.5 15 1 10 Q3 1 14 1Z" fill="#14b4e8"/><path d="M4 13 Q1 20 5 26" fill="none" stroke="#0a8ac0" stroke-width="1"/><path d="M4 16 L7 19" stroke="#fff" stroke-width="1.5"/></svg>
<div class="a" style="left:1177px;top:1018px;width:8px;height:4px;border-radius:2px;background:#9aa0b4"></div>
<!-- vscode -->
<svg style="left:1220px;top:983px" width="31" height="30" viewBox="0 0 31 30"><path d="M22 1 L30.5 5 V25 L22 29 L6 16 L2 19.5 L0.5 18 V12 L2 10.5 L6 14 Z" fill="#1f9cf0"/><path d="M22 8 V22 L12 15Z" fill="#0f1a5c"/><path d="M22 1 L30.5 5 V25 L22 29Z" fill="#2aa8f5"/><path d="M1 11 L22 29 L20 29.5 L0.5 13Z" fill="#0f6ab8" opacity=".6"/></svg>
<div class="a" style="left:1232px;top:1018px;width:8px;height:4px;border-radius:2px;background:#9aa0b4"></div>
<!-- snip -->
<svg style="left:1276px;top:983px" width="31" height="31" viewBox="0 0 31 31"><rect x="0.5" y="0.5" width="22" height="22" rx="2.5" fill="#f0f0f0"/><path d="M4 4 H18 M4 4 V16" stroke="#d83b01" stroke-width="2.5" stroke-dasharray="2.5 1.8"/><path d="M17.5 6 V21 H7" fill="none" stroke="#888" stroke-width="2"/><circle cx="27" cy="16" r="2.6" fill="none" stroke="#2aa8f5" stroke-width="1.6"/><circle cx="21" cy="27" r="2.6" fill="none" stroke="#2aa8f5" stroke-width="1.6"/><path d="M17 19 L25 16.5 M18 19 L21 24.5" stroke="#2aa8f5" stroke-width="1.5"/></svg>
<div class="a" style="left:1287px;top:1018px;width:8px;height:4px;border-radius:2px;background:#9aa0b4"></div>
<!-- tray -->
<svg style="left:1594px;top:991px" width="17" height="12" viewBox="0 0 17 12"><path d="M2 10 L8.5 3.5 L15 10" fill="none" stroke="#f0f0f0" stroke-width="1.8"/></svg>
<div class="t" style="left:1639px;top:981px;font-size:15px;color:#fff;letter-spacing:-0.2px">VIE</div>
<div class="t" style="left:1641px;top:1001px;font-size:15px;color:#fff;letter-spacing:-0.2px">TL</div>
<svg style="left:1687px;top:987px" width="21" height="19" viewBox="0 0 21 19"><path d="M1.5 7.5 Q10.5 -1 19.5 7.5 M4.5 10.5 Q10.5 5 16.5 10.5 M7.5 13.5 Q10.5 11 13.5 13.5" fill="none" stroke="#fff" stroke-width="1.8"/><circle cx="10.5" cy="16.5" r="1.6" fill="#fff"/></svg>
<svg style="left:1717px;top:987px" width="22" height="20" viewBox="0 0 22 20"><path d="M1 7 H5 L10 2.5 V17.5 L5 13 H1Z" fill="none" stroke="#fff" stroke-width="1.6" stroke-linejoin="round"/><path d="M13 7 Q15 10 13 13 M15.5 4.5 Q19 10 15.5 15.5 M18 2 Q23 10 18 18" fill="none" stroke="#fff" stroke-width="1.6"/></svg>
<svg style="left:1746px;top:986px" width="23" height="20" viewBox="0 0 23 20"><rect x="1" y="5" width="18" height="12" rx="2.5" fill="none" stroke="#fff" stroke-width="1.7"/><rect x="19.5" y="8.5" width="2.5" height="5" rx="1" fill="#fff"/><path d="M4 14 L9 9 V14Z" fill="#fff"/><path d="M7 1 L4 7 H7 L5 11" fill="none" stroke="#fff" stroke-width="1.4"/></svg>
<div class="t" style="left:1796px;top:979px;font-size:15px;color:#fff;width:70px;text-align:right">5:45 PM</div>
<div class="t" style="left:1786px;top:999px;font-size:15px;color:#fff;width:80px;text-align:right">12/12/2024</div>
<svg style="left:1876px;top:988px" width="18" height="21" viewBox="0 0 18 21"><path d="M9 1 Q15 1 15.5 8 V13 L17.5 16 H0.5 L2.5 13 V8 Q3 1 9 1Z" fill="#7dd3f5"/><path d="M6 17 Q6 20.5 9 20.5 Q12 20.5 12 17Z" fill="#7dd3f5"/></svg>

</body></html>
